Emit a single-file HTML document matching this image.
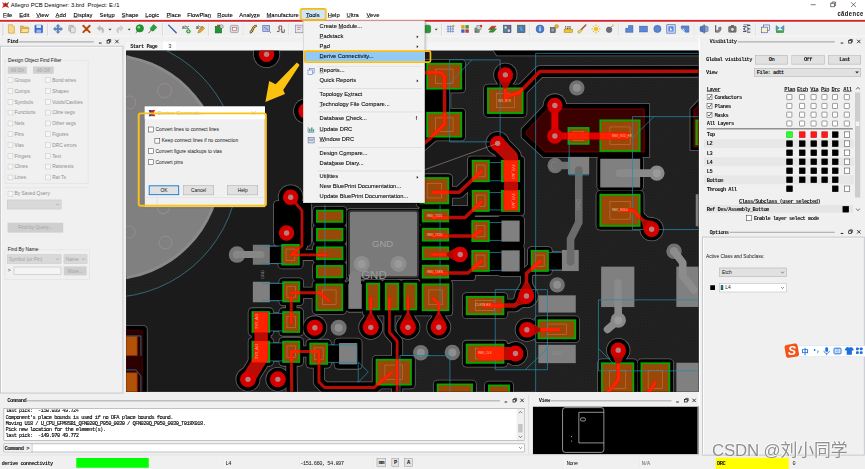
<!DOCTYPE html>
<html lang="en"><head><meta charset="utf-8"><title>Allegro PCB Designer: 3.brd  Project: E:/1</title>
<style>
html,body{margin:0;padding:0;overflow:hidden}
body{width:865px;height:469px;overflow:hidden;position:relative;background:#f0f0f0;font-family:"Liberation Sans",sans-serif;font-size:44.8px;color:#000;line-height:1}
.a{position:absolute;white-space:nowrap}
.m{font-family:"Liberation Mono","DejaVu Sans Mono",monospace;font-size:43.2px;letter-spacing:-4.32px;color:#111;font-weight:bold;margin-top:4.8px}
.btn.m{margin-top:0}
.ui{font-family:"Liberation Sans",sans-serif;font-size:45.6px;color:#111}
.mb span.i{z-index:2;position:absolute;top:97.6px;white-space:nowrap;font-size:46.4px;-webkit-text-stroke:0.8px #000}
u{text-decoration:underline;text-decoration-thickness:3.2px;text-underline-offset:3.2px}
.cb{position:absolute;width:35.2px;height:35.2px;border:4.8px solid #333;background:#fff}
.cbd{position:absolute;width:35.2px;height:35.2px;border:4px solid #c4c4c4;background:#f6f6f6}
.dis{color:#8c8c8c}
.btn{position:absolute;box-sizing:border-box;border:4px solid #adadad;background:#e1e1e1;text-align:center}
.sq{position:absolute;width:44.8px;height:44.8px;box-sizing:border-box;border:4.8px solid #333;background:#fff}
.bk{background:#000;border-color:#000}
.rd{background:#ff1a1a;border-color:#c00}
.gn{background:#2cff2c;border-color:#0b0}
.hl{position:absolute;height:9.6px;background:#adadad}
.ti{position:absolute;top:200px;width:88px;height:80px}
.sep{position:absolute;top:188px;width:4.8px;height:104px;background:#c9c9c9}
.mi{position:absolute;left:128px;white-space:nowrap;font-size:46px;color:#111;-webkit-text-stroke:0.8px #111}
.msep{position:absolute;left:112px;right:16px;height:4.8px;background:#d4d4d4}
.arr{position:absolute;left:905.6px;width:0;height:0;border-left:13.6px solid #111;border-top:11.2px solid transparent;border-bottom:11.2px solid transparent}
</style></head><body><div id="clip" style="position:absolute;left:0;top:0;width:865px;height:469px;overflow:hidden"><div id="root" style="position:absolute;left:0;top:0;width:6920px;height:3752px;transform:scale(0.125);transform-origin:0 0;font-size:44.8px">
<!-- title bar -->
<div class="a" style="left:0;top:0;width:6920px;height:160px;background:#fff"></div>
<svg class="a" style="left:12px;top:8px" width="64" height="64" viewBox="0 0 8 8"><path d="M0.5 1 L3 2.4 L4 1.2 L5 2.4 L7.5 1 L6 4 L7.5 7 L4 5.4 L0.5 7 L2 4Z" fill="#d22"/><path d="M4 1.2 L5 2.4 L7.5 1 L6 4Z" fill="#1a9a1a"/><path d="M2.6 4 L4 3.2 L5.4 4 L4 5Z" fill="#7a1a1a"/></svg>
<div class="a" style="left:86.4px;top:12.8px;font-size:46.8px;color:#000">Allegro PCB Designer: 3.brd&nbsp; Project: E:/1</div>
<svg class="a" style="left:6440px;top:0" width="480" height="80" viewBox="805 0 60 10" fill="none" stroke="#222" stroke-width="0.6"><path d="M810.7 4.7h5"/><rect x="830.8" y="3.2" width="3.6" height="3.6"/><path d="M832 3.2v-1.2h3.6v3.6h-1.2"/><path d="M851.1 2.2l4.8 4.8M855.9 2.2l-4.8 4.8"/></svg>
<!-- menu bar -->
<div class="mb">
<span class="i" style="left:24px"><u>F</u>ile</span><span class="i" style="left:154.4px"><u>E</u>dit</span><span class="i" style="left:290.4px"><u>V</u>iew</span><span class="i" style="left:444.8px"><u>A</u>dd</span><span class="i" style="left:587.2px"><u>D</u>isplay</span><span class="i" style="left:796.8px">Set<u>u</u>p</span><span class="i" style="left:972.8px"><u>S</u>hape</span><span class="i" style="left:1161.6px"><u>L</u>ogic</span><span class="i" style="left:1331.2px"><u>P</u>lace</span><span class="i" style="left:1497.6px">FlowPla<u>n</u></span><span class="i" style="left:1737.6px"><u>R</u>oute</span><span class="i" style="left:1914.4px">Analy<u>z</u>e</span><span class="i" style="left:2132px"><u>M</u>anufacture</span>
<div class="a" style="left:2397.6px;top:64px;width:216px;height:100.8px;box-sizing:border-box;border:13.6px solid #f9b90c;border-radius:19.2px;background:#cde6f8;z-index:1"></div>
<span class="i" style="left:2448px"><u>T</u>ools</span><span class="i" style="left:2621.6px"><u>H</u>elp</span><span class="i" style="left:2772.8px"><u>U</u>ltra</span><span class="i" style="left:2932px"><u>V</u>eve</span>
</div>
<div class="a" style="left:6699.2px;top:87.2px;font-size:50.4px;letter-spacing:4px;color:#111;font-weight:bold;transform:scaleX(0.92);transform-origin:0 0">cādence</div><div class="a" style="left:6732.8px;top:90.4px;width:19.2px;height:4.8px;background:#d22"></div>
<div class="a" style="left:0;top:159.2px;width:6920px;height:16px;background:#d7262c"></div>
<!-- toolbar -->
<div class="a" style="left:0;top:175.2px;width:6920px;height:4.8px;background:#fff"></div>
<svg class="a" style="left:0;top:169.6px" width="6920" height="136" viewBox="0 21.2 865 17"><rect x="2.6" y="23.3" width="0.6" height="13" fill="#c6c6c6"/><g transform="translate(11.4,28.9)"><path d="M-3 -4.2h4l2 2v6.4h-6z" fill="#f7d98a" stroke="#c89a2a" stroke-width="0.6"/><path d="M1 -4.2v2h2" fill="#fff3c8" stroke="#c89a2a" stroke-width="0.4"/></g><g transform="translate(24.7,28.9)"><path d="M-4.2 3.6v-6.6h2.6l1 1.2h4.2v5.4z" fill="#e9b84a" stroke="#b98516" stroke-width="0.5"/><path d="M-4.2 3.6l1.6-4h7.2l-1.6 4z" fill="#fbe29a" stroke="#b98516" stroke-width="0.5"/></g><g transform="translate(38.7,28.9)"><rect x="-3.8" y="-3.8" width="7.6" height="7.6" rx="0.6" fill="#3b6fd1" stroke="#264a9a" stroke-width="0.5"/><rect x="-2.3" y="-3.8" width="4.6" height="2.8" fill="#dfe9fb"/><rect x="-2.3" y="0.8" width="4.6" height="3" fill="#9bb8ee"/></g><rect x="47.5" y="23.3" width="0.6" height="13" fill="#c6c6c6"/><rect x="48.1" y="23.3" width="0.5" height="13" fill="#fff"/><g transform="translate(58.0,28.9)"><path d="M0 -4.6l1.7 1.9h-1v2h2v-1l1.9 1.7l-1.9 1.7v-1h-2v2h1l-1.7 1.9l-1.7-1.9h1v-2h-2v1l-1.9-1.7l1.9-1.7v1h2v-2h-1z" fill="#5a85c8" stroke="#2d5596" stroke-width="0.4"/></g><g transform="translate(72.0,28.9)"><rect x="-3.2" y="-3.6" width="4.6" height="5.8" rx="0.8" fill="#cfcfcf" stroke="#8a8a8a" stroke-width="0.5"/><rect x="-1.4" y="-2" width="4.6" height="5.8" rx="0.8" fill="#e4e4e4" stroke="#8a8a8a" stroke-width="0.5"/></g><g transform="translate(86.5,28.9)"><path d="M-3.2 -3.2l6.4 6.4M3.2 -3.2l-6.4 6.4" stroke="#b8480f" stroke-width="2" stroke-linecap="round"/></g><g transform="translate(101.0,28.9)"><path d="M2.2 3.6c1.4-3 0-5.6-3.4-5.2v-1.8l-2.6 2.8l2.6 2.6v-1.7c2-0.2 3 1 2.2 3.3z" fill="#bdbdbd" stroke="#9a9a9a" stroke-width="0.3"/></g><path d="M108.5 28.599999999999998h3l-1.5 1.8z" fill="#444"/><g transform="translate(119.5,28.9)"><path d="M-2.2 3.6c-1.4-3 0-5.6 3.4-5.2v-1.8l2.6 2.8l-2.6 2.6v-1.7c-2-0.2-3 1-2.2 3.3z" fill="#cfcfcf" stroke="#aaa" stroke-width="0.3"/></g><path d="M127.7 28.599999999999998h3l-1.5 1.8z" fill="#444"/><g transform="translate(139.4,28.9)"><circle cx="0.4" cy="-0.6" r="3.7" fill="#1c9a2e" stroke="#0c5c18" stroke-width="0.5"/><circle cx="-0.6" cy="-1.6" r="1.3" fill="#7fe08c"/><path d="M-3.6 3.8l1.8-1.6" stroke="#333" stroke-width="0.8"/></g><g transform="translate(152.6,28.9)"><path d="M-4 4.2l3-3.4" stroke="#444" stroke-width="0.8"/><path d="M-2.2 -0.8l3.2-3.6l3.2 2.8l-3.4 3.6c-1.4 0.4-3-1-3-2.8z" fill="#25a43a" stroke="#0f6a20" stroke-width="0.5"/></g><rect x="162.5" y="23.3" width="0.6" height="13" fill="#c6c6c6"/><rect x="163.1" y="23.3" width="0.5" height="13" fill="#fff"/><g transform="translate(172.4,28.9)"><path d="M-3.8 -3.8l7.6 7.6" stroke="#2d5fa8" stroke-width="1.3" stroke-linecap="round"/></g><g transform="translate(186.4,28.9)"><text x="-4.4" y="-0.2" font-family="Liberation Sans,sans-serif" font-size="4.6" fill="#333">abc</text><circle cx="2" cy="2.4" r="2.2" fill="#23a534"/><path d="M0.8 2.4h2.4M2 1.2v2.4" stroke="#fff" stroke-width="0.6"/></g><g transform="translate(200.2,28.9)"><text x="-4.4" y="-0.2" font-family="Liberation Sans,sans-serif" font-size="4.6" fill="#333">abc</text><path d="M-2.4 4l1-2.6l4.2-3.6l1.6 1.6l-4.2 3.8z" fill="#e8a320" stroke="#8a5a0a" stroke-width="0.4"/></g><rect x="208.2" y="23.3" width="0.6" height="13" fill="#c6c6c6"/><rect x="208.8" y="23.3" width="0.5" height="13" fill="#fff"/><g transform="translate(219.0,28.9)"><rect x="-3.8" y="-2.6" width="6.4" height="6.6" fill="#1e9632" stroke="#0d5a1b" stroke-width="0.5"/><rect x="-2" y="-4.2" width="3.4" height="2.4" fill="#8a5a2a"/><circle cx="2.6" cy="-2.4" r="1.8" fill="#c8d4e8" stroke="#556" stroke-width="0.4"/></g><g transform="translate(234.3,28.9)"><rect x="-4" y="-3.6" width="8" height="7.2" rx="1.4" fill="#d6dbe8" stroke="#7c86a6" stroke-width="0.6"/><rect x="-2" y="-1.6" width="4" height="3.2" fill="#f4f4f4" stroke="#d0642a" stroke-width="0.6"/></g><rect x="242.9" y="23.3" width="0.6" height="13" fill="#c6c6c6"/><rect x="243.5" y="23.3" width="0.5" height="13" fill="#fff"/><g transform="translate(253.4,28.9)"><path d="M-3.6 3.4c2-0.2 2.4-1.6 3-3.4s1.6-3 4-3.2" fill="none" stroke="#222" stroke-width="2.2"/><path d="M-3.6 3.4c2-0.2 2.4-1.6 3-3.4s1.6-3 4-3.2" fill="none" stroke="#f4c21a" stroke-width="1.1"/></g><g transform="translate(266.6,28.9)"><rect x="-3.8" y="-3.4" width="6.8" height="5.8" fill="#a9c4ee" stroke="#3a62b0" stroke-width="0.6"/><path d="M-2.4 -1.8l4 3M3 2.4l1.2 1.6" stroke="#c03a2a" stroke-width="0.7"/></g><g transform="translate(280.9,28.9)"><path d="M-4 2.6h2.2v-5.6h2.6v6.4h2.6v-3" fill="none" stroke="#666" stroke-width="1"/><path d="M-3 -2l5 5" stroke="#c04a2a" stroke-width="0.6"/></g><rect x="288.7" y="23.3" width="0.6" height="13" fill="#c6c6c6"/><rect x="289.3" y="23.3" width="0.5" height="13" fill="#fff"/><g transform="translate(299.2,28.9)"><rect x="-3.8" y="-3.8" width="7.6" height="7.6" fill="#e6e6ee" stroke="#7a7f96" stroke-width="0.6"/><path d="M-2 -1.6h4M-2 0.4h3" stroke="#c0504a" stroke-width="0.6"/></g><g transform="translate(427.6,28.9)"><rect x="-3.4" y="-3.8" width="6.4" height="7.6" rx="1.6" fill="#2a9a36" stroke="#14601e" stroke-width="0.5"/></g><path d="M434.7 28.599999999999998h3l-1.5 1.8z" fill="#444"/><rect x="441.3" y="23.3" width="0.6" height="13" fill="#c6c6c6"/><rect x="441.9" y="23.3" width="0.5" height="13" fill="#fff"/><g transform="translate(450.5,28.9)"><path d="M-3.6 -2.4h7.2M-3.6 0h7.2M-3.6 2.4h7.2M-2.4 -3.6v7.2M0 -3.6v7.2M2.4 -3.6v7.2" stroke="#5d80c4" stroke-width="0.7"/><circle cx="3" cy="-3.2" r="1" fill="#e9a020"/></g><g transform="translate(465.0,28.9)"><rect x="-3.8" y="-3.8" width="3.4" height="3.4" fill="#e0a21c"/><rect x="0.4" y="-3.8" width="3.4" height="3.4" fill="#3b9a3b"/><rect x="-3.8" y="0.4" width="3.4" height="3.4" fill="#3a66c0"/><rect x="0.4" y="0.4" width="3.4" height="3.4" fill="#c63a2a"/></g><g transform="translate(478.5,28.9)"><rect x="-3.6" y="-1" width="4.4" height="4.6" fill="#888" stroke="#555" stroke-width="0.4"/><rect x="-1.6" y="-3.4" width="4.2" height="4.2" fill="#c8ccd8" stroke="#555" stroke-width="0.4"/><circle cx="2.6" cy="-3" r="1.2" fill="#d23a2a"/><circle cx="-2.4" cy="2.6" r="1.1" fill="#2a9a36"/></g><g transform="translate(492.5,28.9)"><path d="M-4 0.6l3-3.4h4.6l-3 3.4z" fill="#c63a2a" stroke="#7a1a10" stroke-width="0.4"/><path d="M-3.6 3.2l3-3.4h4.6l-3 3.4z" fill="#2f9a3a" stroke="#14601e" stroke-width="0.4"/></g><g transform="translate(507.2,28.9)"><rect x="-3.8" y="-3.8" width="7.6" height="7.6" fill="#5472a8" stroke="#2c3f66" stroke-width="0.5"/><rect x="-2.6" y="-2.6" width="2" height="2.2" fill="#e4e9f4"/><rect x="0.6" y="-2.6" width="2" height="2.2" fill="#e04a3a"/><rect x="-2.6" y="0.6" width="2" height="2.2" fill="#3aa84a"/><rect x="0.6" y="0.6" width="2" height="2.2" fill="#e4e9f4"/></g><g transform="translate(521.2,28.9)"><rect x="-3.8" y="-3.8" width="7.6" height="7.6" fill="#6a7890" stroke="#39445c" stroke-width="0.5"/><circle r="2.8" fill="#3a78c8"/><path d="M-1.6 -1.4c1.2-1 2.4 0.2 1.4 1.4s0.8 1.8 1.8 0.6" stroke="#7fd48a" stroke-width="0.9" fill="none"/></g><rect x="529.7" y="23.3" width="0.6" height="13" fill="#c6c6c6"/><rect x="530.3" y="23.3" width="0.5" height="13" fill="#fff"/><g transform="translate(540.0,28.9)"><circle r="3.9" fill="#4a7fd0" stroke="#2a4f94" stroke-width="0.6"/><rect x="-0.6" y="-0.8" width="1.2" height="3" fill="#fff"/><circle cy="-2" r="0.7" fill="#fff"/></g><g transform="translate(554.0,28.9)"><rect x="-3.8" y="-1.6" width="5.2" height="5.4" fill="#6b6f7a" stroke="#3a3d46" stroke-width="0.4"/><rect x="-2.6" y="-0.4" width="2.6" height="3" fill="#9aa0b0"/><circle cx="2.6" cy="-2.6" r="1.9" fill="#f0b41c" stroke="#a87608" stroke-width="0.4"/></g><g transform="translate(568.3,28.9)"><rect x="-4.2" y="0.2" width="8.4" height="3.2" fill="#f1c232" stroke="#a87a08" stroke-width="0.5"/><text x="-3.6" y="-0.4" font-family="Liberation Sans,sans-serif" font-size="3.6" font-weight="bold" fill="#333">123</text></g><g transform="translate(582.0,28.9)"><path d="M3.8 -4l-4.4 4.6" stroke="#a0522d" stroke-width="1.5" stroke-linecap="round"/><path d="M-1.2 0.2l1.4 1.4l-2.6 2.6l-1.6-0.6l-0.2-1.2z" fill="#f2d064" stroke="#8a6a14" stroke-width="0.4"/></g><g transform="translate(596.0,28.9)"><circle r="2.2" fill="#f6c21c"/><path d="M0 -4.4v1.4M0 4.4v-1.4M-4.4 0h1.4M4.4 0h-1.4M-3.1 -3.1l1 1M3.1 3.1l-1-1M-3.1 3.1l1-1M3.1 -3.1l-1 1" stroke="#e9a60c" stroke-width="0.9"/></g><g transform="translate(609.5,28.9)"><circle cx="-0.4" cy="0.8" r="2.8" fill="#6a6e78" stroke="#3c3f48" stroke-width="0.4"/><path d="M1.6 -1.6l1.4-1.6" stroke="#555" stroke-width="0.7"/><path d="M3 -4.6v1M4.6 -3.2h-1M4.2 -4.4l-0.7 0.7" stroke="#e9a60c" stroke-width="0.6"/></g><rect x="618.7" y="23.3" width="0.6" height="13" fill="#c6c6c6"/><rect x="619.3" y="23.3" width="0.5" height="13" fill="#fff"/><g transform="translate(629.3,28.9)"><path d="M-3.6 3.4v-4h2.8v-2.8h4.4v6.8z" fill="#5b86d4" stroke="#2f55a0" stroke-width="0.5"/></g><g transform="translate(643.5,28.9)"><rect x="-3.8" y="-2.8" width="7.6" height="5.8" fill="#5b86d4" stroke="#2f55a0" stroke-width="0.5"/></g><g transform="translate(657.4,28.9)"><circle r="3.6" fill="#5b86d4" stroke="#2f55a0" stroke-width="0.5"/></g><g transform="translate(671.0,28.9)"><rect x="-4.2" y="-4.2" width="8.4" height="8.4" fill="#cfe0fa" stroke="#2f55a0" stroke-width="0.6"/><rect x="-2.6" y="-2.6" width="5.2" height="5.2" fill="#5b86d4"/><path d="M-1 -1.8l2.6 3.2l-1.4-0.2l-0.8 1.2z" fill="#fff"/></g><g transform="translate(685.1,28.9)"><path d="M-3.8 -3h7.6v6.2h-3.4l-4.2-3.4z" fill="#5b86d4" stroke="#2f55a0" stroke-width="0.5"/><path d="M0.4 3.2l-1.2-3.6l-3-0.4" fill="#dbe7fb" stroke="#2f55a0" stroke-width="0.4"/></g><rect x="693.9" y="23.3" width="0.6" height="13" fill="#c6c6c6"/><rect x="694.5" y="23.3" width="0.5" height="13" fill="#fff"/><g transform="translate(704.1,28.9)"><rect x="-0.5" y="-4.4" width="1" height="8.8" fill="#333"/><path d="M-0.8 -3.2l-3.2 1v4.4l3.2 1z" fill="#4a74c4" stroke="#284a8a" stroke-width="0.4"/><path d="M0.8 -3.2l3.2 1v4.4l-3.2 1z" fill="#8aa8e0" stroke="#284a8a" stroke-width="0.4"/></g><g transform="translate(718.3,28.9)"><path d="M-2.6 -3.8v7.2" stroke="#444" stroke-width="1"/><path d="M-2 3.4c3.6 0.6 5.4-2 4.6-5.4l-2.4 0.6c0.6 2-0.4 3.2-2.2 3z" fill="#888" stroke="#444" stroke-width="0.4"/></g><g transform="translate(732.4,28.9)"><rect x="-3.8" y="-2.6" width="7.6" height="6" rx="0.8" fill="#777" stroke="#444" stroke-width="0.4"/><circle cy="0.4" r="1.9" fill="#ddd" stroke="#333" stroke-width="0.5"/><rect x="-1.4" y="-3.8" width="2.8" height="1.4" fill="#555"/></g><g transform="translate(746.6,28.9)"><path d="M-3.6 -2.6h3M-3.6 0h2.2M-3.6 2.6h3M0.4 -3.4h3.4M0.4 0h3.4M0.4 3.2h3.4" stroke="#3e4c6c" stroke-width="1"/><circle cx="-0.2" r="2.1" fill="none" stroke="#3e4c6c" stroke-width="0.7"/><path d="M-3 -4.4h6" stroke="#3e4c6c" stroke-width="0.5"/></g><rect x="755.1" y="23.3" width="0.6" height="13" fill="#c6c6c6"/><rect x="755.7" y="23.3" width="0.5" height="13" fill="#fff"/><g transform="translate(765.3,28.9)"><rect x="-2" y="-4" width="6" height="5.6" fill="#e8eefb" stroke="#3a5aa8" stroke-width="0.6"/><rect x="-4" y="-1.8" width="6" height="5.6" fill="#fbf1c4" stroke="#3a5aa8" stroke-width="0.6"/></g><g transform="translate(780.0,28.9)"><path d="M-4 -3.4l3.4 2.4l-3.4 2.6z" fill="#57a0c8" stroke="#2a6a8a" stroke-width="0.4"/><path d="M4 -3.4l-3.4 2.4l3.4 2.6z" fill="#57a0c8" stroke="#2a6a8a" stroke-width="0.4"/><rect x="-3.8" y="1.6" width="7.6" height="2.2" fill="#3aa84a" stroke="#1a6a2a" stroke-width="0.3"/></g></svg><div class="a m" style="left:57.6px;top:308px">Find</div>
<div class="hl" style="left:152px;top:330.4px;width:596.8px"></div>
<svg class="a" style="left:778.4px;top:299.2px" width="197.6" height="64" viewBox="97.3 37.4 24.700000000000003 8" fill="none" stroke="#111" stroke-width="0.7"><path d="M99.0 43.1h2.6" stroke-width="0.9"/><rect x="107.10000000000001" y="40.5" width="2.6" height="2.6"/><path d="M108.10000000000001 40.5v-1h2.6v2.6h-1"/><path d="M115.3 39.8l3.4 3.4M118.7 39.8l-3.4 3.4" stroke-width="0.8"/></svg>
<div class="a" style="left:0;top:365.6px;width:987.2px;height:2782.4px;box-sizing:border-box;border:7.2px solid #c2c4cc;box-shadow:inset 6.4px 6.4px 0 #fff;background:#f0f0f0"></div>
<div class="a" style="left:37.6px;top:480px;width:669.6px;height:990.4px;box-sizing:border-box;border:4px solid #dcdcdc"></div>
<div class="a ui" style="left:59.2px;top:461.6px;background:#f0f0f0;padding:0 5.6px;font-size:38.8px">Design Object Find Filter</div>
<div class="a ui" style="left:61.6px;top:532px;width:153.6px;height:57.6px;background:#cfcfcf;color:#a3a3a3;text-align:center;line-height:57.6px;font-size:38.8px">All On</div>
<div class="a ui" style="left:264px;top:532px;width:165.6px;height:57.6px;background:#cfcfcf;color:#a3a3a3;text-align:center;line-height:57.6px;font-size:38.8px">All Off</div>
<div class="cbd" style="left:61.6px;top:620px"></div><div class="a ui dis" style="left:116px;top:623.2px;font-size:38.8px">Groups</div>
<div class="cbd" style="left:361.6px;top:620px"></div><div class="a ui dis" style="left:417.6px;top:623.2px;font-size:38.8px">Bond wires</div>
<div class="cbd" style="left:61.6px;top:706.4px"></div><div class="a ui dis" style="left:116px;top:709.6px;font-size:38.8px">Comps</div>
<div class="cbd" style="left:361.6px;top:706.4px"></div><div class="a ui dis" style="left:417.6px;top:709.6px;font-size:38.8px">Shapes</div>
<div class="cbd" style="left:61.6px;top:792.8px"></div><div class="a ui dis" style="left:116px;top:796px;font-size:38.8px">Symbols</div>
<div class="cbd" style="left:361.6px;top:792.8px"></div><div class="a ui dis" style="left:417.6px;top:796px;font-size:38.8px">Voids/Cavities</div>
<div class="cbd" style="left:61.6px;top:879.2px"></div><div class="a ui dis" style="left:116px;top:882.4px;font-size:38.8px">Functions</div>
<div class="cbd" style="left:361.6px;top:879.2px"></div><div class="a ui dis" style="left:417.6px;top:882.4px;font-size:38.8px">Cline segs</div>
<div class="cbd" style="left:61.6px;top:965.6px"></div><div class="a ui dis" style="left:116px;top:968.8px;font-size:38.8px">Nets</div>
<div class="cbd" style="left:361.6px;top:965.6px"></div><div class="a ui dis" style="left:417.6px;top:968.8px;font-size:38.8px">Other segs</div>
<div class="cbd" style="left:61.6px;top:1052px"></div><div class="a ui dis" style="left:116px;top:1055.2px;font-size:38.8px">Pins</div>
<div class="cbd" style="left:361.6px;top:1052px"></div><div class="a ui dis" style="left:417.6px;top:1055.2px;font-size:38.8px">Figures</div>
<div class="cbd" style="left:61.6px;top:1138.4px"></div><div class="a ui dis" style="left:116px;top:1141.6px;font-size:38.8px">Vias</div>
<div class="cbd" style="left:361.6px;top:1138.4px"></div><div class="a ui dis" style="left:417.6px;top:1141.6px;font-size:38.8px">DRC errors</div>
<div class="cbd" style="left:61.6px;top:1224.8px"></div><div class="a ui dis" style="left:116px;top:1228px;font-size:38.8px">Fingers</div>
<div class="cbd" style="left:361.6px;top:1224.8px"></div><div class="a ui dis" style="left:417.6px;top:1228px;font-size:38.8px">Text</div>
<div class="cbd" style="left:61.6px;top:1311.2px"></div><div class="a ui dis" style="left:116px;top:1314.4px;font-size:38.8px">Clines</div>
<div class="cbd" style="left:361.6px;top:1311.2px"></div><div class="a ui dis" style="left:417.6px;top:1314.4px;font-size:38.8px">Ratsnests</div>
<div class="cbd" style="left:61.6px;top:1397.6px"></div><div class="a ui dis" style="left:116px;top:1400.8px;font-size:38.8px">Lines</div>
<div class="cbd" style="left:361.6px;top:1397.6px"></div><div class="a ui dis" style="left:417.6px;top:1400.8px;font-size:38.8px">Rat Ts</div>
<div class="hl" style="left:37.6px;top:1500.8px;width:669.6px;background:#dcdcdc;height:4px"></div>
<div class="cbd" style="left:61.6px;top:1528px"></div><div class="a ui dis" style="left:116px;top:1531.2px;font-size:38.8px">By Saved Query</div>
<div class="a" style="left:56px;top:1598.4px;width:435.2px;height:75.2px;box-sizing:border-box;border:4px solid #c8c8c8;background:#d9d9d9"></div>
<svg class="a" style="left:444px;top:1624px" width="32" height="24" viewBox="0 0 4 3"><path d="M0.4 0.5l1.6 1.7l1.6-1.7" fill="none" stroke="#9a9a9a" stroke-width="0.6"/></svg>
<div class="a ui" style="left:60px;top:1782.4px;width:446.4px;height:78.4px;background:#cfcfcf;color:#a3a3a3;text-align:center;line-height:78.4px;font-size:38.8px">Find by Query...</div>
<div class="a" style="left:37.6px;top:1996.8px;width:680px;height:240px;box-sizing:border-box;border:4px solid #dcdcdc"></div>
<div class="a ui" style="left:56px;top:1972px;background:#f0f0f0;padding:0 5.6px;font-size:38.8px">Find By Name</div>
<div class="a ui" style="left:56.8px;top:2036px;width:432.8px;height:72.8px;box-sizing:border-box;border:4px solid #c8c8c8;background:#d9d9d9;color:#a3a3a3;line-height:66.4px;padding-left:10.4px;font-size:38.8px">Symbol (or Pin)</div>
<svg class="a" style="left:444px;top:2062.4px" width="32" height="24" viewBox="0 0 4 3"><path d="M0.4 0.5l1.6 1.7l1.6-1.7" fill="none" stroke="#9a9a9a" stroke-width="0.6"/></svg>
<div class="a ui" style="left:509.6px;top:2036px;width:188px;height:72.8px;box-sizing:border-box;border:4px solid #c8c8c8;background:#d9d9d9;color:#a3a3a3;line-height:66.4px;padding-left:12.8px;font-size:38.8px">Name</div>
<svg class="a" style="left:652px;top:2062.4px" width="32" height="24" viewBox="0 0 4 3"><path d="M0.4 0.5l1.6 1.7l1.6-1.7" fill="none" stroke="#9a9a9a" stroke-width="0.6"/></svg>
<div class="a ui" style="left:61.6px;top:2142.4px;font-size:38.8px">&gt;</div>
<div class="a" style="left:110.4px;top:2133.6px;width:379.2px;height:65.6px;box-sizing:border-box;border:4px solid #b4b4b4;background:#f4f4f4"></div>
<div class="a ui" style="left:509.6px;top:2131.2px;width:183.2px;height:72px;background:#cfcfcf;color:#a3a3a3;text-align:center;line-height:72px;font-size:38.8px">More...</div>
<div class="a" style="left:1008px;top:339.2px;width:4580px;height:65.6px;background:#f5f5f5"></div><div class="a" style="left:0;top:287.2px;width:6920px;height:4.8px;background:#f9f9f9"></div>
<div class="a m" style="left:1041.6px;top:348px;font-weight:bold">Start Page</div>
<div class="a" style="left:1304px;top:332.8px;width:104px;height:72px;background:#fff"></div><div class="a m" style="left:1345.6px;top:346.4px;font-weight:normal;color:#333">3</div>
<div class="a m" style="left:5676px;top:308px">Visibility</div>
<div class="hl" style="left:5901.6px;top:330.4px;width:776px"></div>
<svg class="a" style="left:6712px;top:299.2px" width="198.4" height="64" viewBox="839 37.4 24.799999999999955 8" fill="none" stroke="#111" stroke-width="0.7"><path d="M840.7 43.1h2.6" stroke-width="0.9"/><rect x="848.6999999999999" y="40.5" width="2.6" height="2.6"/><path d="M849.6999999999999 40.5v-1h2.6v2.6h-1"/><path d="M857.0999999999999 39.8l3.4 3.4M860.5 39.8l-3.4 3.4" stroke-width="0.8"/></svg>
<div class="a" style="left:5588px;top:304px;width:11.2px;height:3336px;background:#fff"></div>
<div class="a m" style="left:5648.8px;top:452.8px">Global visibility</div>
<div class="btn m" style="left:6041.6px;top:441.6px;width:260.8px;height:73.6px;line-height:65.6px">On</div>
<div class="btn m" style="left:6331.2px;top:441.6px;width:264.8px;height:73.6px;line-height:65.6px">Off</div>
<div class="btn m" style="left:6626.4px;top:441.6px;width:261.6px;height:73.6px;line-height:65.6px">Last</div>
<div class="a m" style="left:5648.8px;top:556px">View</div>
<div class="btn m" style="left:6034.4px;top:544px;width:853.6px;height:68px;line-height:60px;text-align:left;padding-left:16px">File: adtt</div>
<svg class="a" style="left:6840px;top:568px" width="32" height="24" viewBox="0 0 4 3"><path d="M0.2 0.4h3.6l-1.8 2.2z" fill="#222"/></svg>
<div class="a m" style="left:5653.6px;top:688px;text-decoration:underline;text-decoration-thickness:4px;text-underline-offset:4px">Layer</div>
<div class="a m" style="left:6273.6px;top:688px;text-decoration:underline;text-decoration-thickness:4px;text-underline-offset:4px">Plan</div>
<div class="a m" style="left:6376px;top:688px;text-decoration:underline;text-decoration-thickness:4px;text-underline-offset:4px">Etch</div>
<div class="a m" style="left:6481.6px;top:688px;text-decoration:underline;text-decoration-thickness:4px;text-underline-offset:4px">Via</div>
<div class="a m" style="left:6567.2px;top:688px;text-decoration:underline;text-decoration-thickness:4px;text-underline-offset:4px">Pin</div>
<div class="a m" style="left:6652px;top:688px;text-decoration:underline;text-decoration-thickness:4px;text-underline-offset:4px">Drc</div>
<div class="a m" style="left:6746.4px;top:688px;text-decoration:underline;text-decoration-thickness:4px;text-underline-offset:4px">All</div>
<svg class="a" style="left:6844px;top:692px" width="40" height="32" viewBox="0 0 5 4"><path d="M0.5 3l2-2.2l2 2.2" fill="none" stroke="#333" stroke-width="0.7"/></svg>
<div class="a" style="left:6840px;top:740px;width:42.4px;height:840px;background:#cdcdcd"></div>
<div class="a" style="left:6846.4px;top:972px;width:28.8px;height:36px;background:#f4f4f4"></div>
<svg class="a" style="left:6844px;top:1660px" width="40" height="32" viewBox="0 0 5 4"><path d="M0.5 1l2 2.2l2-2.2" fill="none" stroke="#333" stroke-width="0.7"/></svg>
<div class="cb" style="left:5653.6px;top:755.2px;width:36.8px;height:36.8px"></div><svg class="a" style="left:5659.2px;top:760px" width="36.8" height="36.8" viewBox="0 0 4.6 4.6"><path d="M0.6 2.2l1.2 1.3l2.2-3" fill="none" stroke="#111" stroke-width="0.7"/></svg>
<div class="a m" style="left:5716.8px;top:754.4px">Conductors</div>
<div class="sq" style="left:6292px;top:754.4px;border-radius:6.4px;border-color:#444"></div>
<div class="sq" style="left:6394.4px;top:754.4px;border-radius:6.4px;border-color:#444"></div>
<div class="sq" style="left:6486.4px;top:754.4px;border-radius:6.4px;border-color:#444"></div>
<div class="sq" style="left:6572.8px;top:754.4px;border-radius:6.4px;border-color:#444"></div>
<div class="sq" style="left:6657.6px;top:754.4px;border-radius:6.4px;border-color:#444"></div>
<div class="sq" style="left:6752px;top:754.4px;border-radius:6.4px;border-color:#444"></div>
<div class="cb" style="left:5653.6px;top:825.6px;width:36.8px;height:36.8px"></div><svg class="a" style="left:5659.2px;top:830.4px" width="36.8" height="36.8" viewBox="0 0 4.6 4.6"><path d="M0.6 2.2l1.2 1.3l2.2-3" fill="none" stroke="#111" stroke-width="0.7"/></svg>
<div class="a m" style="left:5716.8px;top:824.8px">Planes</div>
<div class="sq" style="left:6292px;top:824.8px;border-radius:6.4px;border-color:#444"></div>
<div class="sq" style="left:6394.4px;top:824.8px;border-radius:6.4px;border-color:#444"></div>
<div class="sq" style="left:6486.4px;top:824.8px;border-radius:6.4px;border-color:#444"></div>
<div class="sq" style="left:6572.8px;top:824.8px;border-radius:6.4px;border-color:#444"></div>
<div class="sq" style="left:6657.6px;top:824.8px;border-radius:6.4px;border-color:#444"></div>
<div class="sq" style="left:6752px;top:824.8px;border-radius:6.4px;border-color:#444"></div>
<div class="cb" style="left:5653.6px;top:896px;width:36.8px;height:36.8px"></div><svg class="a" style="left:5659.2px;top:900.8px" width="36.8" height="36.8" viewBox="0 0 4.6 4.6"><path d="M0.6 2.2l1.2 1.3l2.2-3" fill="none" stroke="#111" stroke-width="0.7"/></svg>
<div class="a m" style="left:5716.8px;top:895.2px">Masks</div>
<div class="sq" style="left:6292px;top:895.2px;border-radius:6.4px;border-color:#444"></div>
<div class="sq" style="left:6394.4px;top:895.2px;border-radius:6.4px;border-color:#444"></div>
<div class="sq" style="left:6486.4px;top:895.2px;border-radius:6.4px;border-color:#444"></div>
<div class="sq" style="left:6572.8px;top:895.2px;border-radius:6.4px;border-color:#444"></div>
<div class="sq" style="left:6657.6px;top:895.2px;border-radius:6.4px;border-color:#444"></div>
<div class="sq" style="left:6752px;top:895.2px;border-radius:6.4px;border-color:#444"></div>
<div class="a m" style="left:5653.6px;top:965.6px">All Layers</div>
<div class="sq" style="left:6292px;top:965.6px;border-radius:6.4px;border-color:#444"></div>
<div class="sq" style="left:6394.4px;top:965.6px;border-radius:6.4px;border-color:#444"></div>
<div class="sq" style="left:6486.4px;top:965.6px;border-radius:6.4px;border-color:#444"></div>
<div class="sq" style="left:6572.8px;top:965.6px;border-radius:6.4px;border-color:#444"></div>
<div class="sq" style="left:6657.6px;top:965.6px;border-radius:6.4px;border-color:#444"></div>
<div class="sq" style="left:6752px;top:965.6px;border-radius:6.4px;border-color:#444"></div>
<div class="hl" style="left:5653.6px;top:1028px;width:1168px;background:#333;height:6.4px"></div>
<div class="a m" style="left:5653.6px;top:1053.6px">Top</div>
<div class="sq gn" style="left:6292px;top:1052.8px;width:48px;height:48px"></div>
<div class="sq rd" style="left:6394.4px;top:1052.8px;width:48px;height:48px"></div>
<div class="sq rd" style="left:6486.4px;top:1052.8px;width:48px;height:48px"></div>
<div class="sq rd" style="left:6572.8px;top:1052.8px;width:48px;height:48px"></div>
<div class="sq bk" style="left:6657.6px;top:1052.8px;width:48px;height:48px"></div>
<div class="sq " style="left:6752px;top:1052.8px;width:48px;height:48px"></div>
<div class="a" style="left:5632px;top:1112.8px;width:1200px;height:72px;background:#e7e7e7"></div>
<div class="a m" style="left:5653.6px;top:1125.6px">L2</div>
<div class="sq bk" style="left:6292px;top:1124.8px;width:48px;height:48px"></div>
<div class="sq bk" style="left:6394.4px;top:1124.8px;width:48px;height:48px"></div>
<div class="sq bk" style="left:6486.4px;top:1124.8px;width:48px;height:48px"></div>
<div class="sq bk" style="left:6572.8px;top:1124.8px;width:48px;height:48px"></div>
<div class="sq bk" style="left:6657.6px;top:1124.8px;width:48px;height:48px"></div>
<div class="sq " style="left:6752px;top:1124.8px;width:48px;height:48px"></div>
<div class="a m" style="left:5653.6px;top:1198.4px">L3</div>
<div class="sq bk" style="left:6292px;top:1197.6px;width:48px;height:48px"></div>
<div class="sq bk" style="left:6394.4px;top:1197.6px;width:48px;height:48px"></div>
<div class="sq bk" style="left:6486.4px;top:1197.6px;width:48px;height:48px"></div>
<div class="sq bk" style="left:6572.8px;top:1197.6px;width:48px;height:48px"></div>
<div class="sq bk" style="left:6657.6px;top:1197.6px;width:48px;height:48px"></div>
<div class="sq " style="left:6752px;top:1197.6px;width:48px;height:48px"></div>
<div class="a" style="left:5632px;top:1257.6px;width:1200px;height:72px;background:#e7e7e7"></div>
<div class="a m" style="left:5653.6px;top:1270.4px">L4</div>
<div class="sq bk" style="left:6292px;top:1269.6px;width:48px;height:48px"></div>
<div class="sq bk" style="left:6394.4px;top:1269.6px;width:48px;height:48px"></div>
<div class="sq bk" style="left:6486.4px;top:1269.6px;width:48px;height:48px"></div>
<div class="sq bk" style="left:6572.8px;top:1269.6px;width:48px;height:48px"></div>
<div class="sq bk" style="left:6657.6px;top:1269.6px;width:48px;height:48px"></div>
<div class="sq " style="left:6752px;top:1269.6px;width:48px;height:48px"></div>
<div class="a m" style="left:5653.6px;top:1342.4px">L5</div>
<div class="sq bk" style="left:6292px;top:1341.6px;width:48px;height:48px"></div>
<div class="sq bk" style="left:6394.4px;top:1341.6px;width:48px;height:48px"></div>
<div class="sq bk" style="left:6486.4px;top:1341.6px;width:48px;height:48px"></div>
<div class="sq bk" style="left:6572.8px;top:1341.6px;width:48px;height:48px"></div>
<div class="sq bk" style="left:6657.6px;top:1341.6px;width:48px;height:48px"></div>
<div class="sq " style="left:6752px;top:1341.6px;width:48px;height:48px"></div>
<div class="a" style="left:5632px;top:1401.6px;width:1200px;height:72px;background:#e7e7e7"></div>
<div class="a m" style="left:5653.6px;top:1414.4px">Bottom</div>
<div class="sq bk" style="left:6292px;top:1414.4px;width:48px;height:48px"></div>
<div class="sq bk" style="left:6394.4px;top:1414.4px;width:48px;height:48px"></div>
<div class="sq bk" style="left:6486.4px;top:1414.4px;width:48px;height:48px"></div>
<div class="sq bk" style="left:6572.8px;top:1414.4px;width:48px;height:48px"></div>
<div class="sq bk" style="left:6657.6px;top:1414.4px;width:48px;height:48px"></div>
<div class="a m" style="left:5653.6px;top:1487.2px">Through All</div>
<div class="sq bk" style="left:6292px;top:1486.4px;width:48px;height:48px"></div>
<div class="sq bk" style="left:6657.6px;top:1486.4px;width:48px;height:48px"></div>
<div class="sq " style="left:6752px;top:1486.4px;width:48px;height:48px"></div>
<div class="a m" style="left:5912.8px;top:1585.6px;text-decoration:underline;text-decoration-thickness:4px;text-underline-offset:4px">Class/Subclass (user selected)</div>
<div class="a" style="left:5646.4px;top:1640px;width:1177.6px;height:62.4px;background:#e5e5e5"></div><div class="a m" style="left:5653.6px;top:1651.2px">Ref Des/Assembly_Bottom</div><div class="sq bk" style="left:6742.4px;top:1650.4px;width:48px;height:48px"></div>
<div class="cb" style="left:5970.4px;top:1723.2px;width:36.8px;height:36.8px"></div><div class="a m" style="left:6032px;top:1722.4px">Enable layer select mode</div>
<div class="a m" style="left:5676.8px;top:1831.2px">Options</div>
<div class="hl" style="left:5836px;top:1853.6px;width:841.6px"></div>
<svg class="a" style="left:6712px;top:1822.4px" width="198.4" height="64" viewBox="839 227.8 24.799999999999955 8" fill="none" stroke="#111" stroke-width="0.7"><path d="M840.7 233.5h2.6" stroke-width="0.9"/><rect x="848.6999999999999" y="230.9" width="2.6" height="2.6"/><path d="M849.6999999999999 230.9v-1h2.6v2.6h-1"/><path d="M857.0999999999999 230.20000000000002l3.4 3.4M860.5 230.20000000000002l-3.4 3.4" stroke-width="0.8"/></svg>
<div class="a" style="left:5616.8px;top:1892.8px;width:1300.8px;height:1752px;box-sizing:border-box;border:7.2px solid #c2c4cc;box-shadow:inset 6.4px 6.4px 0 #fff"></div>
<div class="a ui" style="left:5647.2px;top:2032px;font-size:38.8px">Active Class and Subclass:</div>
<div class="a ui" style="left:5753.6px;top:2142.4px;width:539.2px;height:72px;box-sizing:border-box;border:4px solid #adadad;background:#e1e1e1;line-height:64px;padding-left:17.6px;font-size:38.8px">Etch</div>
<svg class="a" style="left:6244px;top:2168px" width="32" height="24" viewBox="0 0 4 3"><path d="M0.4 0.5l1.6 1.7l1.6-1.7" fill="none" stroke="#444" stroke-width="0.6"/></svg>
<div class="a ui" style="left:5753.6px;top:2265.6px;width:539.2px;height:72px;box-sizing:border-box;border:4px solid #adadad;background:#fff;line-height:64px;padding-left:44px;font-size:38.8px">L4</div>
<svg class="a" style="left:6244px;top:2291.2px" width="32" height="24" viewBox="0 0 4 3"><path d="M0.4 0.5l1.6 1.7l1.6-1.7" fill="none" stroke="#444" stroke-width="0.6"/></svg>
<div class="a" style="left:5681.6px;top:2281.6px;width:38.4px;height:38.4px;background:#000"></div><div class="a" style="left:5767.2px;top:2283.2px;width:17.6px;height:36.8px;background:#1a8aa0;border:3.2px solid #222;box-sizing:border-box"></div>
<div class="a m" style="left:57.6px;top:3179.2px">Command</div><div class="hl" style="left:216px;top:3201.6px;width:3784px"></div>
<svg class="a" style="left:4016px;top:3168px" width="208" height="64" viewBox="502 396 26 8" fill="none" stroke="#111" stroke-width="0.7"><path d="M504.6 402h2.6" stroke-width="0.9"/><rect x="513" y="399.4" width="2.6" height="2.6"/><path d="M514 399.4v-1h2.6v2.6h-1"/><path d="M520.4 398.7l3.4 3.4M523.8 398.7l-3.4 3.4" stroke-width="0.8"/></svg>
<div class="a" style="left:28.8px;top:3267.2px;width:4169.6px;height:257.6px;box-sizing:border-box;border:4.8px solid #828790;background:#fff;overflow:hidden"></div>
<div class="a m" style="left:44.8px;top:3261.6px;clip-path:inset(9.6px 0 0 0);font-weight:normal;color:#000;-webkit-text-stroke:0.96px #000">last pick:&nbsp; -150.039 49.724</div>
<div class="a m" style="left:44.8px;top:3311.2px;font-weight:normal;color:#000;-webkit-text-stroke:0.96px #000">Component's place bounds is used if no DFA place bounds found.</div>
<div class="a m" style="left:44.8px;top:3360px;font-weight:normal;color:#000;-webkit-text-stroke:0.96px #000">Moving U18 / U_CPU_EFM8SB1_QFN020Q_P050_0030 / QFN020Q_P050_0030_T018X018.</div>
<div class="a m" style="left:44.8px;top:3409.6px;font-weight:normal;color:#000;-webkit-text-stroke:0.96px #000">Pick new location for the element(s).</div>
<div class="a m" style="left:44.8px;top:3458.4px;font-weight:normal;color:#000;-webkit-text-stroke:0.96px #000">last pick:&nbsp; -149.970 49.772</div>
<div class="a" style="left:4132.8px;top:3272px;width:60.8px;height:248px;background:#f0f0f0"></div>
<svg class="a" style="left:4132.8px;top:3272px" width="60.8" height="248" viewBox="0 0 7.6 31" fill="none" stroke="#555" stroke-width="0.7"><path d="M2.2 4.2l1.6-1.8l1.6 1.8"/><path d="M2.2 26.8l1.6 1.8l1.6-1.8"/><rect x="1.6" y="15" width="4.4" height="8.5" fill="#c4c4c4" stroke="none"/></svg>
<div class="a" style="left:28.8px;top:3548.8px;width:4169.6px;height:68.8px;box-sizing:border-box;border:4.8px solid #828790;background:#fff"></div>
<div class="a" style="left:252.8px;top:3548.8px;width:4.8px;height:68.8px;background:#828790"></div><div class="a" style="left:33.6px;top:3553.6px;width:219.2px;height:59.2px;background:#f0f0f0"></div>
<div class="a m" style="left:36.8px;top:3561.6px">Command &gt;</div>
<svg class="a" style="left:4148.8px;top:3572px" width="32" height="24" viewBox="0 0 4 3"><path d="M0.4 0.5l1.6 1.7l1.6-1.7" fill="none" stroke="#444" stroke-width="0.6"/></svg>
<div class="a m" style="left:4310.4px;top:3179.2px">View</div><div class="hl" style="left:4404px;top:3201.6px;width:968px"></div>
<svg class="a" style="left:5384px;top:3168px" width="208" height="64" viewBox="673 396 26 8" fill="none" stroke="#111" stroke-width="0.7"><path d="M676.2 402h2.6" stroke-width="0.9"/><rect x="684.6" y="399.4" width="2.6" height="2.6"/><path d="M685.6 399.4v-1h2.6v2.6h-1"/><path d="M692.4 398.7l3.4 3.4M695.8 398.7l-3.4 3.4" stroke-width="0.8"/></svg>
<div class="a" style="left:4226.4px;top:3160px;width:5.6px;height:472px;background:#dadada"></div>
<svg class="a" style="left:4262.4px;top:3252px" width="1331.2" height="383.2" viewBox="532.8 406.5 166.4 47.9"><rect x="532.8" y="406.5" width="166.4" height="47.9" fill="#000"/><g fill="none" stroke="#dedede" stroke-width="0.65"><rect x="562.6" y="407.6" width="41.3" height="44.8" rx="2.6"/><path d="M603.9 412.3h-25v30.6h25"/><rect x="580.6" y="417.9" width="4.9" height="3.1" rx="1.2"/></g><rect x="571.2" y="436.2" width="0.9" height="0.9" fill="#ddd"/><rect x="571.2" y="440.6" width="0.9" height="0.9" fill="#ddd"/><rect x="697.4" y="406.5" width="1.8" height="47.9" fill="#9a9a9a"/></svg>
<div class="a" style="left:0;top:3636.8px;width:6920px;height:4.8px;background:#dcdcdc"></div>
<div class="a m" style="left:12px;top:3682.4px">derive connectivity</div>
<div class="a" style="left:610.4px;top:3664px;width:580px;height:78.4px;background:#00ff00"></div>
<div class="a m" style="left:1804.8px;top:3682.4px;font-weight:normal">L4</div>
<div class="a m" style="left:2402.4px;top:3682.4px;font-weight:normal">-151.660, 54.897</div>
<div class="btn m" style="left:3013.6px;top:3665.6px;width:74.4px;height:68.8px;line-height:60.8px;border-color:#999;background:#e4e4e4">mm</div>
<div class="btn m" style="left:3132.8px;top:3665.6px;width:59.2px;height:68.8px;line-height:60.8px;border-color:#999;background:#e4e4e4">P</div>
<div class="btn m" style="left:3235.2px;top:3665.6px;width:64.8px;height:68.8px;line-height:60.8px;border-color:#999;background:#e4e4e4">A</div>
<div class="a m" style="left:4533.6px;top:3682.4px;font-weight:normal">None</div><div class="a m" style="left:5133.6px;top:3682.4px;font-weight:normal;color:#666">N/A</div>
<div class="a" style="left:5724px;top:3662.4px;width:585.6px;height:89.6px;background:#ffff00"></div><div class="a m" style="left:5736px;top:3682.4px">DRC</div><div class="a m" style="left:6339.2px;top:3682.4px;font-weight:normal">0</div>
<div class="a" style="left:1794.4px;top:3656px;width:4px;height:88px;background:#fafafa;box-shadow:-4px 0 0 #d4d4d4"></div>
<div class="a" style="left:2396.8px;top:3656px;width:4px;height:88px;background:#fafafa;box-shadow:-4px 0 0 #d4d4d4"></div>
<div class="a" style="left:2994.4px;top:3656px;width:4px;height:88px;background:#fafafa;box-shadow:-4px 0 0 #d4d4d4"></div>
<div class="a" style="left:3324px;top:3656px;width:4px;height:88px;background:#fafafa;box-shadow:-4px 0 0 #d4d4d4"></div>
<div class="a" style="left:4514.4px;top:3656px;width:4px;height:88px;background:#fafafa;box-shadow:-4px 0 0 #d4d4d4"></div>
<div class="a" style="left:5116.8px;top:3656px;width:4px;height:88px;background:#fafafa;box-shadow:-4px 0 0 #d4d4d4"></div>
<div class="a" style="left:5708.8px;top:3656px;width:4px;height:88px;background:#fafafa;box-shadow:-4px 0 0 #d4d4d4"></div>
<div class="a" style="left:6321.6px;top:3656px;width:4px;height:88px;background:#fafafa;box-shadow:-4px 0 0 #d4d4d4"></div><svg id="pcb" viewBox="126.3 50.8 572.2 340.8" width="4577.6" height="2726.4" style="position:absolute;left:1010.4px;top:406.4px;background:#1c1c1c" shape-rendering="geometricPrecision">
<defs><pattern id="hx" width="2.2" height="2.2" patternUnits="userSpaceOnUse" patternTransform="rotate(45)"><rect width="2.2" height="2.2" fill="#252525"/><rect width="2.2" height="0.9" fill="#1d1d1d"/><rect width="0.9" height="2.2" fill="#1d1d1d"/></pattern></defs>
<rect x="120" y="45" width="590" height="355" fill="#1b1b1b"/>
<g fill="url(#hx)"><rect x="449.7" y="59.9" width="50.5" height="83.1"/><rect x="535.7" y="53.4" width="170" height="345"/><rect x="495.3" y="289.7" width="52.2" height="80.1"/><rect x="400" y="355.7" width="50" height="40"/></g>
<circle cx="108.4" cy="167.3" r="131" fill="url(#hx)"/>
<circle cx="108.4" cy="167.3" r="130.3" fill="none" stroke="#3f8496" stroke-width="0.7"/>
<circle cx="108.4" cy="167.3" r="113.3" fill="#8a8a8a"/>
<circle cx="108.4" cy="167.3" r="110.3" fill="#808080"/>
<g fill="none" stroke="#a890a8" stroke-width="0.6"><circle cx="164.6" cy="90.7" r="7"/><circle cx="129.4" cy="102.5" r="6.5"/><circle cx="165.5" cy="242.6" r="6.4"/><circle cx="129.3" cy="232" r="6"/><circle cx="163.4" cy="207.7" r="6"/></g>
<g><circle cx="266.6" cy="54.4" r="13.6" fill="#666666"/>
<circle cx="306.0" cy="111.0" r="12.8" fill="#666666"/>
<circle cx="290.7" cy="197.3" r="12.8" fill="#666666"/>
<rect x="277.5" y="240.2" width="26.1" height="29.1" rx="4.8" fill="#666666"/>
<rect x="261.2" y="245.7" width="24.6" height="18.1" rx="1.8" fill="#666666"/>
<rect x="278.5" y="277.5" width="25.5" height="28.7" rx="4.8" fill="#666666"/>
<rect x="261.2" y="282.7" width="24.6" height="18.6" rx="1.8" fill="#666666"/>
<rect x="247.8" y="307.4" width="26.2" height="29.3" rx="4.8" fill="#666666"/>
<rect x="278.5" y="307.4" width="25.5" height="29.3" rx="4.8" fill="#666666"/>
<rect x="261.2" y="312.2" width="24.6" height="19.6" rx="1.8" fill="#666666"/>
<rect x="247.8" y="337.0" width="26.2" height="29.7" rx="4.8" fill="#666666"/>
<rect x="278.5" y="337.0" width="25.5" height="29.7" rx="4.8" fill="#666666"/>
<rect x="261.2" y="342.2" width="24.6" height="19.6" rx="1.8" fill="#666666"/>
<polyline points="261.2,318.0 261.2,358.0 248.0,379.4" fill="none" stroke="#666666" stroke-width="20.6" stroke-linejoin="round" stroke-linecap="round"/>
<circle cx="248.0" cy="379.4" r="12.4" fill="#666666"/>
<circle cx="277.9" cy="379.4" r="12.4" fill="#666666"/>
<circle cx="286.6" cy="233.1" r="12.1" fill="#666666"/>
<rect x="273.2" y="200.2" width="38.6" height="46.6" rx="4.8" fill="#666666"/>
<polyline points="290.7,197.3 302.0,210.7 302.0,245.9 291.3,255.0 326.5,255.0" fill="none" stroke="#666666" stroke-width="11.9" stroke-linejoin="round" stroke-linecap="round"/>
<polyline points="291.3,292.8 320.1,292.8 329.0,301.0" fill="none" stroke="#666666" stroke-width="12.1" stroke-linejoin="round" stroke-linecap="round"/>
<polyline points="291.3,297.0 291.3,322.7" fill="none" stroke="#666666" stroke-width="12.1" stroke-linejoin="round" stroke-linecap="round"/>
<polyline points="291.3,351.6 319.0,351.6 319.0,382.0 324.5,387.5 374.5,387.5 391.8,372.5" fill="none" stroke="#666666" stroke-width="12.1" stroke-linejoin="round" stroke-linecap="round"/>
<polyline points="291.3,351.6 291.8,395.0" fill="none" stroke="#666666" stroke-width="12.1" stroke-linejoin="round" stroke-linecap="round"/>
<circle cx="314.9" cy="327.8" r="12.4" fill="#666666"/>
<rect x="305.6" y="338.9" width="26.2" height="29.7" rx="4.8" fill="#666666"/>
<rect x="333.8" y="337.8" width="28.7" height="31.9" rx="4.8" fill="#666666"/>
<rect x="319.2" y="344.2" width="26.6" height="19.1" rx="1.8" fill="#666666"/>
<rect x="312.3" y="206.0" width="34.9" height="20.6" rx="4.8" fill="#666666"/>
<rect x="312.3" y="224.2" width="34.9" height="21.0" rx="4.8" fill="#666666"/>
<rect x="312.3" y="242.7" width="34.9" height="21.2" rx="4.8" fill="#666666"/>
<rect x="312.3" y="261.3" width="34.9" height="20.8" rx="4.8" fill="#666666"/>
<rect x="311.8" y="279.8" width="35.2" height="35.1" rx="4.8" fill="#666666"/>
<rect x="346.2" y="208.2" width="74.6" height="71.6" rx="3.8" fill="#666666"/>
<rect x="344.6" y="280.2" width="21.0" height="32.5" rx="4.8" fill="#666666"/>
<rect x="362.2" y="279.0" width="21.8" height="35.2" rx="4.8" fill="#666666"/>
<rect x="381.2" y="279.0" width="21.8" height="35.2" rx="4.8" fill="#666666"/>
<rect x="399.7" y="279.0" width="21.3" height="35.2" rx="4.8" fill="#666666"/>
<rect x="362.2" y="283.2" width="90.6" height="33.1" rx="3.8" fill="#666666"/>
<circle cx="370.8" cy="327.4" r="12.4" fill="#666666"/>
<polyline points="370.8,298.0 370.8,327.4" fill="none" stroke="#666666" stroke-width="11.9" stroke-linejoin="round" stroke-linecap="round"/>
<polygon points="372.3,313.9 378.0,324.7 363.6,324.7 369.3,313.9" fill="#666666" stroke="#666666" stroke-width="8.1" stroke-linejoin="round"/>
<circle cx="408.0" cy="327.4" r="12.4" fill="#666666"/>
<polyline points="408.0,298.0 408.0,327.4" fill="none" stroke="#666666" stroke-width="11.9" stroke-linejoin="round" stroke-linecap="round"/>
<polygon points="409.5,313.9 415.2,324.7 400.8,324.7 406.5,313.9" fill="#666666" stroke="#666666" stroke-width="8.1" stroke-linejoin="round"/>
<polyline points="389.5,298.0 389.5,332.3 397.2,341.3 397.2,395.0" fill="none" stroke="#666666" stroke-width="11.9" stroke-linejoin="round" stroke-linecap="round"/>
<rect x="371.9" y="355.1" width="43.8" height="34.3" rx="4.8" fill="#666666"/>
<rect x="418.1" y="205.4" width="34.9" height="20.8" rx="4.8" fill="#666666"/>
<rect x="418.1" y="224.1" width="34.9" height="21.3" rx="4.8" fill="#666666"/>
<rect x="418.1" y="242.7" width="34.9" height="21.1" rx="4.8" fill="#666666"/>
<rect x="418.1" y="261.1" width="34.9" height="21.3" rx="4.8" fill="#666666"/>
<rect x="418.0" y="279.7" width="35.2" height="35.3" rx="4.8" fill="#666666"/>
<polyline points="432.5,298.0 438.8,303.5 438.8,327.3" fill="none" stroke="#666666" stroke-width="11.9" stroke-linejoin="round" stroke-linecap="round"/>
<circle cx="438.8" cy="327.3" r="12.4" fill="#666666"/>
<polygon points="440.3,313.8 446.0,324.6 431.6,324.6 437.3,313.8" fill="#666666" stroke="#666666" stroke-width="8.1" stroke-linejoin="round"/>
<rect x="467.6" y="216.4" width="26.0" height="29.5" rx="4.8" fill="#666666"/>
<rect x="467.6" y="246.2" width="26.0" height="29.5" rx="4.8" fill="#666666"/>
<rect x="496.2" y="215.3" width="28.8" height="31.7" rx="4.8" fill="#666666"/>
<rect x="496.2" y="245.1" width="28.8" height="31.7" rx="4.8" fill="#666666"/>
<rect x="479.2" y="221.2" width="31.6" height="19.6" rx="1.8" fill="#666666"/>
<rect x="479.2" y="251.2" width="31.6" height="19.6" rx="1.8" fill="#666666"/>
<circle cx="460.3" cy="254.6" r="12.1" fill="#666666"/>
<rect x="444.2" y="205.2" width="31.6" height="75.6" rx="2.8" fill="#666666"/>
<rect x="467.2" y="216.2" width="57.1" height="59.6" rx="3.8" fill="#666666"/>
<polyline points="432.0,217.5 465.1,217.5 481.4,201.9" fill="none" stroke="#666666" stroke-width="12.6" stroke-linejoin="round" stroke-linecap="round"/>
<polyline points="432.0,236.0 472.7,236.0 481.4,230.8" fill="none" stroke="#666666" stroke-width="12.6" stroke-linejoin="round" stroke-linecap="round"/>
<polyline points="432.0,254.6 460.3,254.6" fill="none" stroke="#666666" stroke-width="12.6" stroke-linejoin="round" stroke-linecap="round"/>
<polygon points="446.8,253.1 457.6,247.4 457.6,261.8 446.8,256.1" fill="#666666" stroke="#666666" stroke-width="8.1" stroke-linejoin="round"/>
<polyline points="432.0,273.0 468.0,273.0 481.4,260.9" fill="none" stroke="#666666" stroke-width="12.6" stroke-linejoin="round" stroke-linecap="round"/>
<rect x="527.1" y="246.2" width="25.6" height="29.5" rx="4.8" fill="#666666"/>
<rect x="539.2" y="251.2" width="23.6" height="19.6" rx="1.8" fill="#666666"/>
<polyline points="540.5,260.9 526.5,273.4 526.5,296.0" fill="none" stroke="#666666" stroke-width="12.6" stroke-linejoin="round" stroke-linecap="round"/>
<circle cx="526.5" cy="296.0" r="12.1" fill="#666666"/>
<polygon points="528.0,282.5 533.7,293.3 519.3,293.3 525.0,282.5" fill="#666666" stroke="#666666" stroke-width="8.1" stroke-linejoin="round"/>
<rect x="462.0" y="292.2" width="46.2" height="26.8" rx="4.8" fill="#666666"/>
<polyline points="484.8,305.5 515.0,305.5 526.5,296.0" fill="none" stroke="#666666" stroke-width="13.6" stroke-linejoin="round" stroke-linecap="round"/>
<polygon points="516.3,302.5 519.9,292.2 529.0,303.2 518.2,304.8" fill="#666666" stroke="#666666" stroke-width="8.1" stroke-linejoin="round"/>
<rect x="533.8" y="315.6" width="46.2" height="27.5" rx="4.8" fill="#666666"/>
<circle cx="526.9" cy="329.8" r="12.1" fill="#666666"/>
<polyline points="526.9,329.8 558.7,329.8" fill="none" stroke="#666666" stroke-width="12.6" stroke-linejoin="round" stroke-linecap="round"/>
<polygon points="540.4,331.3 529.6,337.0 529.6,322.6 540.4,328.3" fill="#666666" stroke="#666666" stroke-width="8.1" stroke-linejoin="round"/>
<rect x="462.0" y="339.9" width="46.2" height="27.7" rx="4.8" fill="#666666"/>
<polyline points="482.8,353.6 515.5,353.6" fill="none" stroke="#666666" stroke-width="20.6" stroke-linejoin="round" stroke-linecap="round"/>
<circle cx="515.5" cy="353.6" r="12.4" fill="#666666"/>
<rect x="433.0" y="379.8" width="43.8" height="20.4" rx="4.8" fill="#666666"/>
<rect x="484.2" y="380.8" width="29.7" height="19.4" rx="4.8" fill="#666666"/>
<rect x="422.5" y="59.1" width="43.5" height="34.3" rx="4.8" fill="#666666"/>
<rect x="422.5" y="108.1" width="43.5" height="33.3" rx="4.8" fill="#666666"/>
<rect x="421.4" y="79.7" width="29.9" height="40.6" rx="3.8" fill="#666666"/>
<polygon points="489.0,44.0 497.0,55.5 705.0,55.5 705.0,44.0" fill="#666666" stroke="#666666" stroke-width="1.7" stroke-linejoin="miter"/>
<polyline points="420.0,72.9 441.1,72.9 444.6,76.8 444.6,123.8 431.5,137.2 420.0,147.0" fill="none" stroke="#666666" stroke-width="12.6" stroke-linejoin="round" stroke-linecap="round"/>
<rect x="483.3" y="83.7" width="44.1" height="34.1" rx="4.8" fill="#666666"/>
<circle cx="505.4" cy="74.9" r="12.1" fill="#666666"/>
<polygon points="503.9,88.4 498.2,77.6 512.6,77.6 506.9,88.4" fill="#666666" stroke="#666666" stroke-width="8.1" stroke-linejoin="round"/>
<polyline points="505.4,74.9 505.4,100.8" fill="none" stroke="#666666" stroke-width="12.6" stroke-linejoin="round" stroke-linecap="round"/>
<polyline points="505.4,97.0 518.8,93.0 539.9,71.6 702.0,71.4" fill="none" stroke="#666666" stroke-width="12.6" stroke-linejoin="round" stroke-linecap="round"/>
<circle cx="497.7" cy="143.4" r="12.1" fill="#666666"/>
<polyline points="497.7,143.4 511.1,156.9 511.1,204.0" fill="none" stroke="#666666" stroke-width="21.6" stroke-linejoin="round" stroke-linecap="round"/>
<rect x="468.0" y="156.1" width="25.6" height="29.9" rx="4.8" fill="#666666"/>
<rect x="497.3" y="156.1" width="26.6" height="29.9" rx="4.8" fill="#666666"/>
<rect x="468.0" y="186.2" width="25.6" height="29.5" rx="4.8" fill="#666666"/>
<rect x="497.3" y="186.2" width="26.6" height="29.5" rx="4.8" fill="#666666"/>
<rect x="479.2" y="161.2" width="31.6" height="20.1" rx="1.8" fill="#666666"/>
<rect x="479.2" y="191.2" width="31.6" height="19.6" rx="1.8" fill="#666666"/>
<polyline points="481.4,171.2 459.3,192.3 433.4,192.3" fill="none" stroke="#666666" stroke-width="12.6" stroke-linejoin="round" stroke-linecap="round"/>
<rect x="467.2" y="155.7" width="57.6" height="60.6" rx="3.8" fill="#666666"/>
<rect x="415.8" y="173.4" width="37.2" height="34.7" rx="4.8" fill="#666666"/>
<polygon points="526.6,131.0 547.7,109.0 644.3,109.0 644.3,152.0 545.0,152.0 526.6,135.0" fill="#666666" stroke="#666666" stroke-width="11.6" stroke-linejoin="miter"/>
<circle cx="554.9" cy="105.5" r="12.1" fill="#666666"/>
<circle cx="554.9" cy="136.1" r="12.1" fill="#666666"/>
<rect x="567.2" y="143.2" width="22.8" height="14.6" rx="0.8" fill="#666666"/>
<rect x="596.5" y="155.0" width="47.5" height="36.3" rx="4.8" fill="#666666"/>
<rect x="595.7" y="190.1" width="48.7" height="40.5" rx="4.8" fill="#666666"/>
<polyline points="621.4,210.2 632.9,210.2 651.7,229.3" fill="none" stroke="#666666" stroke-width="12.6" stroke-linejoin="round" stroke-linecap="round"/>
<circle cx="651.7" cy="229.3" r="12.1" fill="#666666"/>
<polygon points="644.4,219.7 654.9,222.4 644.7,232.4 642.2,221.8" fill="#666666" stroke="#666666" stroke-width="8.1" stroke-linejoin="round"/>
<circle cx="618.3" cy="350.2" r="12.1" fill="#666666"/>
<polygon points="616.8,363.7 611.1,352.9 625.5,352.9 619.8,363.7" fill="#666666" stroke="#666666" stroke-width="8.1" stroke-linejoin="round"/>
<rect x="597.3" y="358.6" width="40.8" height="41.6" rx="4.8" fill="#666666"/>
<rect x="636.8" y="358.6" width="37.3" height="41.6" rx="4.8" fill="#666666"/>
<polyline points="618.3,350.2 618.3,380.0 606.0,395.0" fill="none" stroke="#666666" stroke-width="12.6" stroke-linejoin="round" stroke-linecap="round"/>
<polygon points="705.0,100.0 699.0,100.0 690.5,109.0 690.5,150.0 705.0,150.0" fill="#666666" stroke="#666666" stroke-width="1.7" stroke-linejoin="miter"/>
<rect x="114.7" y="325.0" width="33.0" height="76.3" rx="4.8" fill="#666666"/></g>
<g><circle cx="266.6" cy="54.4" r="12.8" fill="#000"/>
<circle cx="306.0" cy="111.0" r="12.0" fill="#000"/>
<circle cx="290.7" cy="197.3" r="12.0" fill="#000"/>
<rect x="278.3" y="241.0" width="24.5" height="27.5" rx="4.0" fill="#000"/>
<rect x="262.0" y="246.5" width="23.0" height="16.5" rx="1.0" fill="#000"/>
<rect x="279.3" y="278.3" width="23.9" height="27.1" rx="4.0" fill="#000"/>
<rect x="262.0" y="283.5" width="23.0" height="17.0" rx="1.0" fill="#000"/>
<rect x="248.6" y="308.2" width="24.6" height="27.7" rx="4.0" fill="#000"/>
<rect x="279.3" y="308.2" width="23.9" height="27.7" rx="4.0" fill="#000"/>
<rect x="262.0" y="313.0" width="23.0" height="18.0" rx="1.0" fill="#000"/>
<rect x="248.6" y="337.8" width="24.6" height="28.1" rx="4.0" fill="#000"/>
<rect x="279.3" y="337.8" width="23.9" height="28.1" rx="4.0" fill="#000"/>
<rect x="262.0" y="343.0" width="23.0" height="18.0" rx="1.0" fill="#000"/>
<polyline points="261.2,318.0 261.2,358.0 248.0,379.4" fill="none" stroke="#000" stroke-width="19.0" stroke-linejoin="round" stroke-linecap="round"/>
<circle cx="248.0" cy="379.4" r="11.6" fill="#000"/>
<circle cx="277.9" cy="379.4" r="11.6" fill="#000"/>
<circle cx="286.6" cy="233.1" r="11.3" fill="#000"/>
<rect x="274.0" y="201.0" width="37.0" height="45.0" rx="4.0" fill="#000"/>
<polyline points="290.7,197.3 302.0,210.7 302.0,245.9 291.3,255.0 326.5,255.0" fill="none" stroke="#000" stroke-width="10.3" stroke-linejoin="round" stroke-linecap="round"/>
<polyline points="291.3,292.8 320.1,292.8 329.0,301.0" fill="none" stroke="#000" stroke-width="10.5" stroke-linejoin="round" stroke-linecap="round"/>
<polyline points="291.3,297.0 291.3,322.7" fill="none" stroke="#000" stroke-width="10.5" stroke-linejoin="round" stroke-linecap="round"/>
<polyline points="291.3,351.6 319.0,351.6 319.0,382.0 324.5,387.5 374.5,387.5 391.8,372.5" fill="none" stroke="#000" stroke-width="10.5" stroke-linejoin="round" stroke-linecap="round"/>
<polyline points="291.3,351.6 291.8,395.0" fill="none" stroke="#000" stroke-width="10.5" stroke-linejoin="round" stroke-linecap="round"/>
<circle cx="314.9" cy="327.8" r="11.6" fill="#000"/>
<rect x="306.4" y="339.7" width="24.6" height="28.1" rx="4.0" fill="#000"/>
<rect x="334.6" y="338.6" width="27.1" height="30.3" rx="4.0" fill="#000"/>
<rect x="320.0" y="345.0" width="25.0" height="17.5" rx="1.0" fill="#000"/>
<rect x="313.1" y="206.8" width="33.3" height="19.0" rx="4.0" fill="#000"/>
<rect x="313.1" y="225.0" width="33.3" height="19.4" rx="4.0" fill="#000"/>
<rect x="313.1" y="243.5" width="33.3" height="19.6" rx="4.0" fill="#000"/>
<rect x="313.1" y="262.1" width="33.3" height="19.2" rx="4.0" fill="#000"/>
<rect x="312.6" y="280.6" width="33.6" height="33.5" rx="4.0" fill="#000"/>
<rect x="347.0" y="209.0" width="73.0" height="70.0" rx="3.0" fill="#000"/>
<rect x="345.4" y="281.0" width="19.4" height="30.9" rx="4.0" fill="#000"/>
<rect x="363.0" y="279.8" width="20.2" height="33.6" rx="4.0" fill="#000"/>
<rect x="382.0" y="279.8" width="20.2" height="33.6" rx="4.0" fill="#000"/>
<rect x="400.5" y="279.8" width="19.7" height="33.6" rx="4.0" fill="#000"/>
<rect x="363.0" y="284.0" width="89.0" height="31.5" rx="3.0" fill="#000"/>
<circle cx="370.8" cy="327.4" r="11.6" fill="#000"/>
<polyline points="370.8,298.0 370.8,327.4" fill="none" stroke="#000" stroke-width="10.3" stroke-linejoin="round" stroke-linecap="round"/>
<polygon points="372.3,313.9 378.0,324.7 363.6,324.7 369.3,313.9" fill="#000" stroke="#000" stroke-width="6.5" stroke-linejoin="round"/>
<circle cx="408.0" cy="327.4" r="11.6" fill="#000"/>
<polyline points="408.0,298.0 408.0,327.4" fill="none" stroke="#000" stroke-width="10.3" stroke-linejoin="round" stroke-linecap="round"/>
<polygon points="409.5,313.9 415.2,324.7 400.8,324.7 406.5,313.9" fill="#000" stroke="#000" stroke-width="6.5" stroke-linejoin="round"/>
<polyline points="389.5,298.0 389.5,332.3 397.2,341.3 397.2,395.0" fill="none" stroke="#000" stroke-width="10.3" stroke-linejoin="round" stroke-linecap="round"/>
<rect x="372.7" y="355.9" width="42.2" height="32.7" rx="4.0" fill="#000"/>
<rect x="418.9" y="206.2" width="33.3" height="19.2" rx="4.0" fill="#000"/>
<rect x="418.9" y="224.9" width="33.3" height="19.7" rx="4.0" fill="#000"/>
<rect x="418.9" y="243.5" width="33.3" height="19.5" rx="4.0" fill="#000"/>
<rect x="418.9" y="261.9" width="33.3" height="19.7" rx="4.0" fill="#000"/>
<rect x="418.8" y="280.5" width="33.6" height="33.7" rx="4.0" fill="#000"/>
<polyline points="432.5,298.0 438.8,303.5 438.8,327.3" fill="none" stroke="#000" stroke-width="10.3" stroke-linejoin="round" stroke-linecap="round"/>
<circle cx="438.8" cy="327.3" r="11.6" fill="#000"/>
<polygon points="440.3,313.8 446.0,324.6 431.6,324.6 437.3,313.8" fill="#000" stroke="#000" stroke-width="6.5" stroke-linejoin="round"/>
<rect x="468.4" y="217.2" width="24.4" height="27.9" rx="4.0" fill="#000"/>
<rect x="468.4" y="247.0" width="24.4" height="27.9" rx="4.0" fill="#000"/>
<rect x="497.0" y="216.1" width="27.2" height="30.1" rx="4.0" fill="#000"/>
<rect x="497.0" y="245.9" width="27.2" height="30.1" rx="4.0" fill="#000"/>
<rect x="480.0" y="222.0" width="30.0" height="18.0" rx="1.0" fill="#000"/>
<rect x="480.0" y="252.0" width="30.0" height="18.0" rx="1.0" fill="#000"/>
<circle cx="460.3" cy="254.6" r="11.3" fill="#000"/>
<rect x="445.0" y="206.0" width="30.0" height="74.0" rx="2.0" fill="#000"/>
<rect x="468.0" y="217.0" width="55.5" height="58.0" rx="3.0" fill="#000"/>
<polyline points="432.0,217.5 465.1,217.5 481.4,201.9" fill="none" stroke="#000" stroke-width="11.0" stroke-linejoin="round" stroke-linecap="round"/>
<polyline points="432.0,236.0 472.7,236.0 481.4,230.8" fill="none" stroke="#000" stroke-width="11.0" stroke-linejoin="round" stroke-linecap="round"/>
<polyline points="432.0,254.6 460.3,254.6" fill="none" stroke="#000" stroke-width="11.0" stroke-linejoin="round" stroke-linecap="round"/>
<polygon points="446.8,253.1 457.6,247.4 457.6,261.8 446.8,256.1" fill="#000" stroke="#000" stroke-width="6.5" stroke-linejoin="round"/>
<polyline points="432.0,273.0 468.0,273.0 481.4,260.9" fill="none" stroke="#000" stroke-width="11.0" stroke-linejoin="round" stroke-linecap="round"/>
<rect x="527.9" y="247.0" width="24.0" height="27.9" rx="4.0" fill="#000"/>
<rect x="540.0" y="252.0" width="22.0" height="18.0" rx="1.0" fill="#000"/>
<polyline points="540.5,260.9 526.5,273.4 526.5,296.0" fill="none" stroke="#000" stroke-width="11.0" stroke-linejoin="round" stroke-linecap="round"/>
<circle cx="526.5" cy="296.0" r="11.3" fill="#000"/>
<polygon points="528.0,282.5 533.7,293.3 519.3,293.3 525.0,282.5" fill="#000" stroke="#000" stroke-width="6.5" stroke-linejoin="round"/>
<rect x="462.8" y="293.0" width="44.6" height="25.2" rx="4.0" fill="#000"/>
<polyline points="484.8,305.5 515.0,305.5 526.5,296.0" fill="none" stroke="#000" stroke-width="12.0" stroke-linejoin="round" stroke-linecap="round"/>
<polygon points="516.3,302.5 519.9,292.2 529.0,303.2 518.2,304.8" fill="#000" stroke="#000" stroke-width="6.5" stroke-linejoin="round"/>
<rect x="534.6" y="316.4" width="44.6" height="25.9" rx="4.0" fill="#000"/>
<circle cx="526.9" cy="329.8" r="11.3" fill="#000"/>
<polyline points="526.9,329.8 558.7,329.8" fill="none" stroke="#000" stroke-width="11.0" stroke-linejoin="round" stroke-linecap="round"/>
<polygon points="540.4,331.3 529.6,337.0 529.6,322.6 540.4,328.3" fill="#000" stroke="#000" stroke-width="6.5" stroke-linejoin="round"/>
<rect x="462.8" y="340.7" width="44.6" height="26.1" rx="4.0" fill="#000"/>
<polyline points="482.8,353.6 515.5,353.6" fill="none" stroke="#000" stroke-width="19.0" stroke-linejoin="round" stroke-linecap="round"/>
<circle cx="515.5" cy="353.6" r="11.6" fill="#000"/>
<rect x="433.8" y="380.6" width="42.2" height="18.8" rx="4.0" fill="#000"/>
<rect x="485.0" y="381.6" width="28.1" height="17.8" rx="4.0" fill="#000"/>
<rect x="423.3" y="59.9" width="41.9" height="32.7" rx="4.0" fill="#000"/>
<rect x="423.3" y="108.9" width="41.9" height="31.7" rx="4.0" fill="#000"/>
<rect x="422.2" y="80.5" width="28.3" height="39.0" rx="3.0" fill="#000"/>
<polygon points="489.0,44.0 497.0,55.5 705.0,55.5 705.0,44.0" fill="#000" stroke="#000" stroke-width="0.1" stroke-linejoin="miter"/>
<polyline points="420.0,72.9 441.1,72.9 444.6,76.8 444.6,123.8 431.5,137.2 420.0,147.0" fill="none" stroke="#000" stroke-width="11.0" stroke-linejoin="round" stroke-linecap="round"/>
<rect x="484.1" y="84.5" width="42.5" height="32.5" rx="4.0" fill="#000"/>
<circle cx="505.4" cy="74.9" r="11.3" fill="#000"/>
<polygon points="503.9,88.4 498.2,77.6 512.6,77.6 506.9,88.4" fill="#000" stroke="#000" stroke-width="6.5" stroke-linejoin="round"/>
<polyline points="505.4,74.9 505.4,100.8" fill="none" stroke="#000" stroke-width="11.0" stroke-linejoin="round" stroke-linecap="round"/>
<polyline points="505.4,97.0 518.8,93.0 539.9,71.6 702.0,71.4" fill="none" stroke="#000" stroke-width="11.0" stroke-linejoin="round" stroke-linecap="round"/>
<circle cx="497.7" cy="143.4" r="11.3" fill="#000"/>
<polyline points="497.7,143.4 511.1,156.9 511.1,204.0" fill="none" stroke="#000" stroke-width="20.0" stroke-linejoin="round" stroke-linecap="round"/>
<rect x="468.8" y="156.9" width="24.0" height="28.3" rx="4.0" fill="#000"/>
<rect x="498.1" y="156.9" width="25.0" height="28.3" rx="4.0" fill="#000"/>
<rect x="468.8" y="187.0" width="24.0" height="27.9" rx="4.0" fill="#000"/>
<rect x="498.1" y="187.0" width="25.0" height="27.9" rx="4.0" fill="#000"/>
<rect x="480.0" y="162.0" width="30.0" height="18.5" rx="1.0" fill="#000"/>
<rect x="480.0" y="192.0" width="30.0" height="18.0" rx="1.0" fill="#000"/>
<polyline points="481.4,171.2 459.3,192.3 433.4,192.3" fill="none" stroke="#000" stroke-width="11.0" stroke-linejoin="round" stroke-linecap="round"/>
<rect x="468.0" y="156.5" width="56.0" height="59.0" rx="3.0" fill="#000"/>
<rect x="416.6" y="174.2" width="35.6" height="33.1" rx="4.0" fill="#000"/>
<polygon points="526.6,131.0 547.7,109.0 644.3,109.0 644.3,152.0 545.0,152.0 526.6,135.0" fill="#000" stroke="#000" stroke-width="10.0" stroke-linejoin="miter"/>
<circle cx="554.9" cy="105.5" r="11.3" fill="#000"/>
<circle cx="554.9" cy="136.1" r="11.3" fill="#000"/>
<rect x="568.0" y="144.0" width="21.2" height="13.0" rx="0.0" fill="#000"/>
<rect x="597.3" y="155.8" width="45.9" height="34.7" rx="4.0" fill="#000"/>
<rect x="596.5" y="190.9" width="47.1" height="38.9" rx="4.0" fill="#000"/>
<polyline points="621.4,210.2 632.9,210.2 651.7,229.3" fill="none" stroke="#000" stroke-width="11.0" stroke-linejoin="round" stroke-linecap="round"/>
<circle cx="651.7" cy="229.3" r="11.3" fill="#000"/>
<polygon points="644.4,219.7 654.9,222.4 644.7,232.4 642.2,221.8" fill="#000" stroke="#000" stroke-width="6.5" stroke-linejoin="round"/>
<circle cx="618.3" cy="350.2" r="11.3" fill="#000"/>
<polygon points="616.8,363.7 611.1,352.9 625.5,352.9 619.8,363.7" fill="#000" stroke="#000" stroke-width="6.5" stroke-linejoin="round"/>
<rect x="598.1" y="359.4" width="39.2" height="40.0" rx="4.0" fill="#000"/>
<rect x="637.6" y="359.4" width="35.7" height="40.0" rx="4.0" fill="#000"/>
<polyline points="618.3,350.2 618.3,380.0 606.0,395.0" fill="none" stroke="#000" stroke-width="11.0" stroke-linejoin="round" stroke-linecap="round"/>
<polygon points="705.0,100.0 699.0,100.0 690.5,109.0 690.5,150.0 705.0,150.0" fill="#000" stroke="#000" stroke-width="0.1" stroke-linejoin="miter"/>
<rect x="115.5" y="325.8" width="31.4" height="74.7" rx="4.0" fill="#000"/></g>
<g><polygon points="526.6,131.0 547.7,109.0 644.3,109.0 644.3,152.0 545.0,152.0 526.6,135.0" fill="#3b0000" stroke="#b00000" stroke-width="0.6"/>
<polygon points="705,104 700,104 694,110 694,147 705,147" fill="#3b0000" stroke="#b00000" stroke-width="0.6"/>
<rect x="120" y="330.3" width="22.4" height="70" rx="2" fill="#2c0000" stroke="#700000" stroke-width="0.5"/></g>
<g><rect x="252.9" y="244.8" width="17.0" height="20.0" fill="#767676"/>
<circle cx="237.1" cy="254.6" r="8.3" fill="#767676"/><circle cx="237.1" cy="254.6" r="4" fill="#8a8a8a"/>
<polyline points="237.1,254.6 261.0,254.6" fill="none" stroke="#868686" stroke-width="7" stroke-linejoin="round" stroke-linecap="round"/>
<rect x="252.9" y="281.8" width="17.0" height="20.5" fill="#808080"/>
<circle cx="338.7" cy="327.8" r="8" fill="#717171"/><circle cx="338.7" cy="327.8" r="4" fill="#8e8e8e"/>
<rect x="339.1" y="343.1" width="18.1" height="21.3" fill="#808080"/>
<rect x="349" y="210.7" width="69.2" height="66.7" rx="2.5" fill="#7a7a7a" stroke="#2e2e2e" stroke-width="2"/>
<circle cx="361.7" cy="264.0" r="8" fill="#8d8d8d"/><circle cx="361.7" cy="264.0" r="4" fill="#9a9a9a"/>
<circle cx="398.6" cy="264.0" r="8" fill="#8d8d8d"/><circle cx="398.6" cy="264.0" r="4" fill="#9a9a9a"/>
<rect x="348.4" y="284.0" width="13.4" height="24.9" fill="#808080"/>
<polyline points="355.0,277.0 355.0,290.0" fill="none" stroke="#808080" stroke-width="12" stroke-linejoin="round" stroke-linecap="round"/>
<circle cx="420.8" cy="352.8" r="7.7" fill="#717171"/><circle cx="420.8" cy="352.8" r="4" fill="#8e8e8e"/>
<circle cx="452.4" cy="352.6" r="7.7" fill="#717171"/><circle cx="452.4" cy="352.6" r="4" fill="#8e8e8e"/>
<rect x="501.5" y="220.6" width="18.2" height="21.1" fill="#808080"/>
<rect x="501.5" y="250.4" width="18.2" height="21.1" fill="#808080"/>
<rect x="562.0" y="250.0" width="16.8" height="21.1" fill="#808080"/>
<circle cx="557.2" cy="284.9" r="7.7" fill="#717171"/><circle cx="557.2" cy="284.9" r="4" fill="#8e8e8e"/>
<rect x="538.4" y="295.4" width="37.4" height="17.2" fill="#808080"/>
<rect x="538.4" y="344.9" width="37.4" height="18.3" fill="#808080"/>
<circle cx="576.9" cy="87.9" r="7.7" fill="#717171"/><circle cx="576.9" cy="87.9" r="4" fill="#8e8e8e"/>
<circle cx="555.2" cy="165.5" r="7.7" fill="#717171"/><circle cx="555.2" cy="165.5" r="4" fill="#8e8e8e"/>
<polyline points="555.2,165.5 575.0,165.5" fill="none" stroke="#717171" stroke-width="7.6" stroke-linejoin="round" stroke-linecap="round"/>
<rect x="568.0" y="156.9" width="21.2" height="17.6" fill="#808080"/>
<polyline points="578.8,170.0 578.8,222.6 570.6,238.9 570.6,261.9" fill="none" stroke="#6b6b6b" stroke-width="7.6" stroke-linejoin="round" stroke-linecap="round"/>
<rect x="600.3" y="158.8" width="39.9" height="28.7" fill="#808080"/>
<polyline points="619.5,173.2 656.9,173.2" fill="none" stroke="#8a8a8a" stroke-width="7.6" stroke-linejoin="round" stroke-linecap="round"/>
<circle cx="656.9" cy="173.2" r="7.7" fill="#8a8a8a"/><circle cx="656.9" cy="173.2" r="4" fill="#9a9a9a"/>
<rect x="601.2" y="266.7" width="33.2" height="40.4" fill="#808080"/>
<polyline points="618.0,283.0 618.3,320.2 607.6,329.4" fill="none" stroke="#8a8a8a" stroke-width="7.6" stroke-linejoin="round" stroke-linecap="round"/>
<circle cx="618.3" cy="320.2" r="7.7" fill="#8a8a8a"/><circle cx="618.3" cy="320.2" r="4" fill="#9a9a9a"/>
<rect x="676.4" y="266.7" width="23.6" height="40.3" fill="#808080"/>
<circle cx="674.1" cy="251.3" r="7.7" fill="#717171"/><circle cx="674.1" cy="251.3" r="4" fill="#8e8e8e"/>
<polyline points="674.1,251.3 682.8,262.8 682.8,276.0 694.0,290.0" fill="none" stroke="#8c8c8c" stroke-width="7.6" stroke-linejoin="round" stroke-linecap="round"/>
<rect x="676.4" y="362.8" width="23.6" height="33.2" fill="#808080"/>
<rect x="695.8" y="194.3" width="4.2" height="32.1" fill="#808080"/></g>
<g><rect x="282.2" y="244.9" width="16.7" height="19.7" fill="#9a4807" stroke="#00ac00" stroke-width="1.8"/>
<rect x="286.1" y="249.1" width="8.8" height="11.4" fill="none" stroke="#c47a52" stroke-width="0.55"/>
<rect x="283.2" y="282.2" width="16.1" height="19.3" fill="#9a4807" stroke="#00ac00" stroke-width="1.8"/>
<rect x="287.0" y="286.3" width="8.6" height="11.2" fill="none" stroke="#c47a52" stroke-width="0.55"/>
<rect x="252.5" y="312.1" width="16.8" height="19.9" fill="#9a4807" stroke="#00ac00" stroke-width="1.8"/>
<rect x="256.4" y="316.3" width="8.9" height="11.5" fill="none" stroke="#c47a52" stroke-width="0.55"/>
<rect x="283.2" y="312.1" width="16.1" height="19.9" fill="#9a4807" stroke="#00ac00" stroke-width="1.8"/>
<rect x="287.0" y="316.3" width="8.6" height="11.5" fill="none" stroke="#c47a52" stroke-width="0.55"/>
<rect x="252.5" y="341.7" width="16.8" height="20.3" fill="#9a4807" stroke="#00ac00" stroke-width="1.8"/>
<rect x="256.4" y="346.0" width="8.9" height="11.7" fill="none" stroke="#c47a52" stroke-width="0.55"/>
<rect x="283.2" y="341.7" width="16.1" height="20.3" fill="#9a4807" stroke="#00ac00" stroke-width="1.8"/>
<rect x="287.0" y="346.0" width="8.6" height="11.7" fill="none" stroke="#c47a52" stroke-width="0.55"/>
<rect x="310.3" y="343.6" width="16.8" height="20.3" fill="#9a4807" stroke="#00ac00" stroke-width="1.8"/>
<rect x="314.3" y="347.9" width="8.9" height="11.7" fill="none" stroke="#c47a52" stroke-width="0.55"/>
<rect x="317.0" y="210.7" width="25.5" height="11.2" fill="#9a4807" stroke="#00ac00" stroke-width="1.8"/>
<rect x="317.0" y="228.9" width="25.5" height="11.6" fill="#9a4807" stroke="#00ac00" stroke-width="1.8"/>
<rect x="317.0" y="247.4" width="25.5" height="11.8" fill="#9a4807" stroke="#00ac00" stroke-width="1.8"/>
<rect x="317.0" y="266.0" width="25.5" height="11.4" fill="#9a4807" stroke="#00ac00" stroke-width="1.8"/>
<rect x="316.5" y="284.5" width="25.8" height="25.7" fill="#9a4807" stroke="#00ac00" stroke-width="1.8"/>
<rect x="322.7" y="290.0" width="13.4" height="14.7" fill="none" stroke="#c47a52" stroke-width="0.55"/>
<rect x="366.9" y="283.7" width="12.4" height="25.8" fill="#9a4807" stroke="#00ac00" stroke-width="1.8"/>
<rect x="385.9" y="283.7" width="12.4" height="25.8" fill="#9a4807" stroke="#00ac00" stroke-width="1.8"/>
<rect x="404.4" y="283.7" width="11.9" height="25.8" fill="#9a4807" stroke="#00ac00" stroke-width="1.8"/>
<rect x="376.6" y="359.8" width="34.4" height="24.9" fill="#9a4807" stroke="#00ac00" stroke-width="1.8"/>
<rect x="385.0" y="365.1" width="17.7" height="14.2" fill="none" stroke="#c47a52" stroke-width="0.55"/>
<rect x="422.8" y="210.1" width="25.5" height="11.4" fill="#9a4807" stroke="#00ac00" stroke-width="1.8"/>
<rect x="422.8" y="228.8" width="25.5" height="11.9" fill="#9a4807" stroke="#00ac00" stroke-width="1.8"/>
<rect x="422.8" y="247.4" width="25.5" height="11.7" fill="#9a4807" stroke="#00ac00" stroke-width="1.8"/>
<rect x="422.8" y="265.8" width="25.5" height="11.9" fill="#9a4807" stroke="#00ac00" stroke-width="1.8"/>
<rect x="422.7" y="284.4" width="25.8" height="25.9" fill="#9a4807" stroke="#00ac00" stroke-width="1.8"/>
<rect x="428.9" y="290.0" width="13.4" height="14.8" fill="none" stroke="#c47a52" stroke-width="0.55"/>
<rect x="472.3" y="221.1" width="16.6" height="20.1" fill="#9a4807" stroke="#00ac00" stroke-width="1.8"/>
<rect x="476.2" y="225.3" width="8.8" height="11.6" fill="none" stroke="#c47a52" stroke-width="0.55"/>
<rect x="472.3" y="250.9" width="16.6" height="20.1" fill="#9a4807" stroke="#00ac00" stroke-width="1.8"/>
<rect x="476.2" y="255.1" width="8.8" height="11.6" fill="none" stroke="#c47a52" stroke-width="0.55"/>
<rect x="531.8" y="250.9" width="16.2" height="20.1" fill="#9a4807" stroke="#00ac00" stroke-width="1.8"/>
<rect x="535.6" y="255.1" width="8.6" height="11.6" fill="none" stroke="#c47a52" stroke-width="0.55"/>
<rect x="466.7" y="296.9" width="36.8" height="17.4" fill="#9a4807" stroke="#00ac00" stroke-width="1.8"/>
<rect x="475.7" y="300.5" width="18.9" height="10.1" fill="none" stroke="#c47a52" stroke-width="0.55"/>
<rect x="538.5" y="320.3" width="36.8" height="18.1" fill="#9a4807" stroke="#00ac00" stroke-width="1.8"/>
<rect x="547.5" y="324.1" width="18.9" height="10.5" fill="none" stroke="#c47a52" stroke-width="0.55"/>
<rect x="466.7" y="344.6" width="36.8" height="18.3" fill="#9a4807" stroke="#00ac00" stroke-width="1.8"/>
<rect x="475.7" y="348.4" width="18.9" height="10.6" fill="none" stroke="#c47a52" stroke-width="0.55"/>
<rect x="437.7" y="384.5" width="34.4" height="11.0" fill="#9a4807" stroke="#00ac00" stroke-width="1.8"/>
<rect x="488.9" y="385.5" width="20.3" height="10.0" fill="#9a4807" stroke="#00ac00" stroke-width="1.8"/>
<rect x="427.2" y="63.8" width="34.1" height="24.9" fill="#9a4807" stroke="#00ac00" stroke-width="1.8"/>
<rect x="435.5" y="69.1" width="17.6" height="14.2" fill="none" stroke="#c47a52" stroke-width="0.55"/>
<rect x="427.2" y="112.8" width="34.1" height="23.9" fill="#9a4807" stroke="#00ac00" stroke-width="1.8"/>
<rect x="435.5" y="117.9" width="17.6" height="13.7" fill="none" stroke="#c47a52" stroke-width="0.55"/>
<rect x="488.0" y="88.4" width="34.7" height="24.7" fill="#9a4807" stroke="#00ac00" stroke-width="1.8"/>
<rect x="496.4" y="93.7" width="17.9" height="14.1" fill="none" stroke="#c47a52" stroke-width="0.55"/>
<rect x="472.7" y="160.8" width="16.2" height="20.5" fill="#9a4807" stroke="#00ac00" stroke-width="1.8"/>
<rect x="476.5" y="165.1" width="8.6" height="11.8" fill="none" stroke="#c47a52" stroke-width="0.55"/>
<rect x="502.0" y="160.8" width="17.2" height="20.5" fill="#9a4807" stroke="#00ac00" stroke-width="1.8"/>
<rect x="506.1" y="165.1" width="9.1" height="11.8" fill="none" stroke="#c47a52" stroke-width="0.55"/>
<rect x="472.7" y="190.9" width="16.2" height="20.1" fill="#9a4807" stroke="#00ac00" stroke-width="1.8"/>
<rect x="476.5" y="195.1" width="8.6" height="11.6" fill="none" stroke="#c47a52" stroke-width="0.55"/>
<rect x="502.0" y="190.9" width="17.2" height="20.1" fill="#9a4807" stroke="#00ac00" stroke-width="1.8"/>
<rect x="506.1" y="195.1" width="9.1" height="11.6" fill="none" stroke="#c47a52" stroke-width="0.55"/>
<rect x="420.5" y="178.1" width="27.8" height="25.3" fill="#9a4807" stroke="#00ac00" stroke-width="1.8"/>
<rect x="427.2" y="183.5" width="14.4" height="14.5" fill="none" stroke="#c47a52" stroke-width="0.55"/>
<rect x="568.5" y="128.0" width="20.2" height="15.9" fill="#9a4807" stroke="#00ac00" stroke-width="1.8"/>
<rect x="573.3" y="131.3" width="10.6" height="9.3" fill="none" stroke="#c47a52" stroke-width="0.55"/>
<rect x="600.4" y="120.4" width="39.3" height="30.6" fill="#9a4807" stroke="#00ac00" stroke-width="1.8"/>
<rect x="610.0" y="127.0" width="20.2" height="17.4" fill="none" stroke="#c47a52" stroke-width="0.55"/>
<rect x="600.4" y="194.8" width="39.3" height="31.1" fill="#9a4807" stroke="#00ac00" stroke-width="1.8"/>
<rect x="610.0" y="201.5" width="20.2" height="17.7" fill="none" stroke="#c47a52" stroke-width="0.55"/>
<rect x="602.0" y="363.3" width="31.4" height="32.2" fill="#9a4807" stroke="#00ac00" stroke-width="1.8"/>
<rect x="609.6" y="370.3" width="16.2" height="18.3" fill="none" stroke="#c47a52" stroke-width="0.55"/>
<rect x="641.5" y="363.3" width="27.9" height="32.2" fill="#9a4807" stroke="#00ac00" stroke-width="1.8"/>
<rect x="648.2" y="370.3" width="14.4" height="18.3" fill="none" stroke="#c47a52" stroke-width="0.55"/>
<rect x="696.3" y="120.5" width="9.2" height="24.0" fill="#9a4807" stroke="#00ac00" stroke-width="1.8"/>
<rect x="120" y="336.4" width="17.2" height="19.3" fill="#b25208" stroke="#8a2a00" stroke-width="0.8"/>
<rect x="120" y="372.8" width="17.2" height="25" fill="#b25208" stroke="#8a2a00" stroke-width="0.8"/></g>
<g fill="none" stroke="#2389a6" stroke-width="0.75"><polyline points="449.7,142.0 449.7,59.9 500.2,59.9 500.2,143.0"/>
<polyline points="471.8,59.9 449.7,83.5"/>
<polyline points="449.7,141.9 490.0,141.9"/>
<polyline points="702.0,53.4 535.7,53.4 535.7,395.0"/>
<polyline points="702.0,116.7 632.5,116.7 632.5,229.6 702.0,229.6"/>
<polyline points="654.0,116.7 632.5,138.0"/>
<polyline points="569.2,127.0 569.2,175.0 589.0,175.0"/>
<polyline points="440.1,205.0 440.1,311.0"/>
<polyline points="495.3,289.7 547.5,289.7 547.5,369.8 495.3,369.8 495.3,289.7"/>
<polyline points="525.3,369.8 547.5,348.6"/>
<polyline points="418.0,355.7 450.0,355.7 450.0,395.0"/>
<polyline points="702.0,299.9 598.5,299.9 598.5,370.9 702.0,370.9"/>
<polyline points="598.5,348.6 614.7,364.8"/>
<polyline points="325.0,205.0 325.0,290.0"/>
<polyline points="489.4,162.6 501.5,162.6"/>
<polyline points="489.4,180.8 501.5,180.8"/>
<polyline points="489.4,192.6 501.5,192.6"/>
<polyline points="489.4,210.0 501.5,210.0"/>
<polyline points="489.4,222.6 501.5,222.6"/>
<polyline points="489.4,240.5 501.5,240.5"/>
<polyline points="489.4,252.5 501.5,252.5"/>
<polyline points="489.4,270.5 501.5,270.5"/>
<polyline points="262.0,246.0 285.0,246.0"/>
<polyline points="262.0,263.6 285.0,263.6"/>
<polyline points="262.0,283.5 285.0,283.5"/>
<polyline points="262.0,300.5 285.0,300.5"/>
<polyline points="262.0,313.5 285.0,313.5"/>
<polyline points="262.0,331.0 285.0,331.0"/>
<polyline points="262.0,343.0 285.0,343.0"/>
<polyline points="262.0,361.0 285.0,361.0"/>
<polyline points="327.6,345.0 357.0,345.0 357.0,362.5 327.6,362.5"/>
<polyline points="358.3,362.0 368.3,372.0 358.3,382.4 358.3,362.0"/>
<polyline points="400.0,395.0 400.0,355.6 430.0,355.6"/>
<polyline points="548.5,252.5 562.0,252.5"/>
<polyline points="548.5,270.0 562.0,270.0"/>
<polyline points="126.0,336.0 141.0,336.0 141.0,356.0"/>
<polyline points="126.0,370.0 136.0,370.0 141.0,376.0 141.0,395.0"/></g>
<clipPath id="pc"><rect x="281.7" y="244.4" width="17.7" height="20.7"/><rect x="282.7" y="281.7" width="17.1" height="20.3"/><rect x="252.0" y="311.6" width="17.8" height="20.9"/><rect x="282.7" y="311.6" width="17.1" height="20.9"/><rect x="252.0" y="341.2" width="17.8" height="21.3"/><rect x="282.7" y="341.2" width="17.1" height="21.3"/><rect x="309.8" y="343.1" width="17.8" height="21.3"/><rect x="316.5" y="210.2" width="26.5" height="12.2"/><rect x="316.5" y="228.4" width="26.5" height="12.6"/><rect x="316.5" y="246.9" width="26.5" height="12.8"/><rect x="316.5" y="265.5" width="26.5" height="12.4"/><rect x="316.0" y="284.0" width="26.8" height="26.7"/><rect x="366.4" y="283.2" width="13.4" height="26.8"/><rect x="385.4" y="283.2" width="13.4" height="26.8"/><rect x="403.9" y="283.2" width="12.9" height="26.8"/><rect x="376.1" y="359.3" width="35.4" height="25.9"/><rect x="422.3" y="209.6" width="26.5" height="12.4"/><rect x="422.3" y="228.3" width="26.5" height="12.9"/><rect x="422.3" y="246.9" width="26.5" height="12.7"/><rect x="422.3" y="265.3" width="26.5" height="12.9"/><rect x="422.2" y="283.9" width="26.8" height="26.9"/><rect x="471.8" y="220.6" width="17.6" height="21.1"/><rect x="471.8" y="250.4" width="17.6" height="21.1"/><rect x="531.3" y="250.4" width="17.2" height="21.1"/><rect x="466.2" y="296.4" width="37.8" height="18.4"/><rect x="538.0" y="319.8" width="37.8" height="19.1"/><rect x="466.2" y="344.1" width="37.8" height="19.3"/><rect x="437.2" y="384.0" width="35.4" height="12.0"/><rect x="488.4" y="385.0" width="21.3" height="11.0"/><rect x="426.7" y="63.3" width="35.1" height="25.9"/><rect x="426.7" y="112.3" width="35.1" height="24.9"/><rect x="487.5" y="87.9" width="35.7" height="25.7"/><rect x="472.2" y="160.3" width="17.2" height="21.5"/><rect x="501.5" y="160.3" width="18.2" height="21.5"/><rect x="472.2" y="190.4" width="17.2" height="21.1"/><rect x="501.5" y="190.4" width="18.2" height="21.1"/><rect x="420.0" y="177.6" width="28.8" height="26.3"/><rect x="568.0" y="127.5" width="21.2" height="16.9"/><rect x="599.9" y="119.9" width="40.3" height="31.6"/><rect x="599.9" y="194.3" width="40.3" height="32.1"/><rect x="601.5" y="362.8" width="32.4" height="33.2"/><rect x="641.0" y="362.8" width="28.9" height="33.2"/><rect x="695.8" y="120.0" width="10.2" height="25.0"/></clipPath>
<g><polyline points="261.2,312.2 261.2,358.0 248.0,379.4" fill="none" stroke="#b80c04" stroke-width="13.5" stroke-linejoin="round" stroke-linecap="butt"/>
<polyline points="290.7,197.3 302.0,210.7 302.0,245.9 291.3,255.0 326.5,255.0" fill="none" stroke="#b80c04" stroke-width="2.8" stroke-linejoin="round" stroke-linecap="round"/>
<polyline points="291.3,292.8 320.1,292.8 329.0,301.0" fill="none" stroke="#b80c04" stroke-width="3" stroke-linejoin="round" stroke-linecap="round"/>
<polyline points="291.3,297.0 291.3,322.7" fill="none" stroke="#b80c04" stroke-width="3" stroke-linejoin="round" stroke-linecap="round"/>
<polyline points="291.3,351.6 319.0,351.6 319.0,382.0 324.5,387.5 374.5,387.5 391.8,372.5" fill="none" stroke="#b80c04" stroke-width="3" stroke-linejoin="round" stroke-linecap="round"/>
<polyline points="291.3,351.6 291.8,395.0" fill="none" stroke="#b80c04" stroke-width="3" stroke-linejoin="round" stroke-linecap="round"/>
<polyline points="370.8,298.0 370.8,327.4" fill="none" stroke="#b80c04" stroke-width="2.8" stroke-linejoin="round" stroke-linecap="round"/>
<polyline points="408.0,298.0 408.0,327.4" fill="none" stroke="#b80c04" stroke-width="2.8" stroke-linejoin="round" stroke-linecap="round"/>
<polyline points="389.5,298.0 389.5,332.3 397.2,341.3 397.2,395.0" fill="none" stroke="#b80c04" stroke-width="2.8" stroke-linejoin="round" stroke-linecap="round"/>
<polyline points="432.5,298.0 438.8,303.5 438.8,327.3" fill="none" stroke="#b80c04" stroke-width="2.8" stroke-linejoin="round" stroke-linecap="round"/>
<polyline points="432.0,217.5 465.1,217.5 481.4,201.9" fill="none" stroke="#b80c04" stroke-width="3.5" stroke-linejoin="round" stroke-linecap="round"/>
<polyline points="432.0,236.0 472.7,236.0 481.4,230.8" fill="none" stroke="#b80c04" stroke-width="3.5" stroke-linejoin="round" stroke-linecap="round"/>
<polyline points="432.0,254.6 460.3,254.6" fill="none" stroke="#b80c04" stroke-width="3.5" stroke-linejoin="round" stroke-linecap="round"/>
<polyline points="432.0,273.0 468.0,273.0 481.4,260.9" fill="none" stroke="#b80c04" stroke-width="3.5" stroke-linejoin="round" stroke-linecap="round"/>
<polyline points="540.5,260.9 526.5,273.4 526.5,296.0" fill="none" stroke="#b80c04" stroke-width="3.5" stroke-linejoin="round" stroke-linecap="round"/>
<polyline points="484.8,305.5 515.0,305.5 526.5,296.0" fill="none" stroke="#b80c04" stroke-width="4.5" stroke-linejoin="round" stroke-linecap="round"/>
<polyline points="526.9,329.8 558.7,329.8" fill="none" stroke="#b80c04" stroke-width="3.5" stroke-linejoin="round" stroke-linecap="round"/>
<polyline points="482.8,353.6 515.5,353.6" fill="none" stroke="#b80c04" stroke-width="13" stroke-linejoin="round" stroke-linecap="round"/>
<polyline points="420.0,72.9 441.1,72.9 444.6,76.8 444.6,123.8 431.5,137.2 420.0,147.0" fill="none" stroke="#b80c04" stroke-width="3.5" stroke-linejoin="round" stroke-linecap="round"/>
<polyline points="505.4,74.9 505.4,100.8" fill="none" stroke="#b80c04" stroke-width="3.5" stroke-linejoin="round" stroke-linecap="round"/>
<polyline points="505.4,97.0 518.8,93.0 539.9,71.6 702.0,71.4" fill="none" stroke="#b80c04" stroke-width="3.5" stroke-linejoin="round" stroke-linecap="round"/>
<polyline points="497.7,143.4 511.1,156.9 511.1,210.9" fill="none" stroke="#b80c04" stroke-width="14" stroke-linejoin="round" stroke-linecap="butt"/>
<polyline points="481.4,171.2 459.3,192.3 433.4,192.3" fill="none" stroke="#b80c04" stroke-width="3.5" stroke-linejoin="round" stroke-linecap="round"/>
<polyline points="554.9,105.5 554.9,136.1" fill="none" stroke="#e00000" stroke-width="7" stroke-linejoin="round" stroke-linecap="round"/>
<polyline points="554.9,136.1 626.0,136.1" fill="none" stroke="#e00000" stroke-width="7" stroke-linejoin="round" stroke-linecap="round"/>
<polyline points="621.4,210.2 632.9,210.2 651.7,229.3" fill="none" stroke="#b80c04" stroke-width="3.5" stroke-linejoin="round" stroke-linecap="round"/>
<polyline points="618.3,350.2 618.3,380.0 606.0,395.0" fill="none" stroke="#b80c04" stroke-width="3.5" stroke-linejoin="round" stroke-linecap="round"/>
<polyline points="655.1,383.0 647.0,395.0" fill="none" stroke="#b80c04" stroke-width="3.5" stroke-linejoin="round" stroke-linecap="round"/></g>
<g clip-path="url(#pc)"><polyline points="261.2,312.2 261.2,358.0 248.0,379.4" fill="none" stroke="#ff2200" stroke-width="13.5" stroke-linejoin="round" stroke-linecap="butt"/>
<polyline points="290.7,197.3 302.0,210.7 302.0,245.9 291.3,255.0 326.5,255.0" fill="none" stroke="#ff2200" stroke-width="2.8" stroke-linejoin="round" stroke-linecap="round"/>
<polyline points="291.3,292.8 320.1,292.8 329.0,301.0" fill="none" stroke="#ff2200" stroke-width="3" stroke-linejoin="round" stroke-linecap="round"/>
<polyline points="291.3,297.0 291.3,322.7" fill="none" stroke="#ff2200" stroke-width="3" stroke-linejoin="round" stroke-linecap="round"/>
<polyline points="291.3,351.6 319.0,351.6 319.0,382.0 324.5,387.5 374.5,387.5 391.8,372.5" fill="none" stroke="#ff2200" stroke-width="3" stroke-linejoin="round" stroke-linecap="round"/>
<polyline points="291.3,351.6 291.8,395.0" fill="none" stroke="#ff2200" stroke-width="3" stroke-linejoin="round" stroke-linecap="round"/>
<polyline points="370.8,298.0 370.8,327.4" fill="none" stroke="#ff2200" stroke-width="2.8" stroke-linejoin="round" stroke-linecap="round"/>
<polyline points="408.0,298.0 408.0,327.4" fill="none" stroke="#ff2200" stroke-width="2.8" stroke-linejoin="round" stroke-linecap="round"/>
<polyline points="389.5,298.0 389.5,332.3 397.2,341.3 397.2,395.0" fill="none" stroke="#ff2200" stroke-width="2.8" stroke-linejoin="round" stroke-linecap="round"/>
<polyline points="432.5,298.0 438.8,303.5 438.8,327.3" fill="none" stroke="#ff2200" stroke-width="2.8" stroke-linejoin="round" stroke-linecap="round"/>
<polyline points="432.0,217.5 465.1,217.5 481.4,201.9" fill="none" stroke="#ff2200" stroke-width="3.5" stroke-linejoin="round" stroke-linecap="round"/>
<polyline points="432.0,236.0 472.7,236.0 481.4,230.8" fill="none" stroke="#ff2200" stroke-width="3.5" stroke-linejoin="round" stroke-linecap="round"/>
<polyline points="432.0,254.6 460.3,254.6" fill="none" stroke="#ff2200" stroke-width="3.5" stroke-linejoin="round" stroke-linecap="round"/>
<polyline points="432.0,273.0 468.0,273.0 481.4,260.9" fill="none" stroke="#ff2200" stroke-width="3.5" stroke-linejoin="round" stroke-linecap="round"/>
<polyline points="540.5,260.9 526.5,273.4 526.5,296.0" fill="none" stroke="#ff2200" stroke-width="3.5" stroke-linejoin="round" stroke-linecap="round"/>
<polyline points="484.8,305.5 515.0,305.5 526.5,296.0" fill="none" stroke="#ff2200" stroke-width="4.5" stroke-linejoin="round" stroke-linecap="round"/>
<polyline points="526.9,329.8 558.7,329.8" fill="none" stroke="#ff2200" stroke-width="3.5" stroke-linejoin="round" stroke-linecap="round"/>
<polyline points="482.8,353.6 515.5,353.6" fill="none" stroke="#ff2200" stroke-width="13" stroke-linejoin="round" stroke-linecap="round"/>
<polyline points="420.0,72.9 441.1,72.9 444.6,76.8 444.6,123.8 431.5,137.2 420.0,147.0" fill="none" stroke="#ff2200" stroke-width="3.5" stroke-linejoin="round" stroke-linecap="round"/>
<polyline points="505.4,74.9 505.4,100.8" fill="none" stroke="#ff2200" stroke-width="3.5" stroke-linejoin="round" stroke-linecap="round"/>
<polyline points="505.4,97.0 518.8,93.0 539.9,71.6 702.0,71.4" fill="none" stroke="#ff2200" stroke-width="3.5" stroke-linejoin="round" stroke-linecap="round"/>
<polyline points="497.7,143.4 511.1,156.9 511.1,210.9" fill="none" stroke="#ff2200" stroke-width="14" stroke-linejoin="round" stroke-linecap="butt"/>
<polyline points="481.4,171.2 459.3,192.3 433.4,192.3" fill="none" stroke="#ff2200" stroke-width="3.5" stroke-linejoin="round" stroke-linecap="round"/>
<polyline points="554.9,105.5 554.9,136.1" fill="none" stroke="#ff2200" stroke-width="7" stroke-linejoin="round" stroke-linecap="round"/>
<polyline points="554.9,136.1 626.0,136.1" fill="none" stroke="#ff2200" stroke-width="7" stroke-linejoin="round" stroke-linecap="round"/>
<polyline points="621.4,210.2 632.9,210.2 651.7,229.3" fill="none" stroke="#ff2200" stroke-width="3.5" stroke-linejoin="round" stroke-linecap="round"/>
<polyline points="618.3,350.2 618.3,380.0 606.0,395.0" fill="none" stroke="#ff2200" stroke-width="3.5" stroke-linejoin="round" stroke-linecap="round"/>
<polyline points="655.1,383.0 647.0,395.0" fill="none" stroke="#ff2200" stroke-width="3.5" stroke-linejoin="round" stroke-linecap="round"/></g>
<g><polygon points="372.3,313.9 378.0,324.7 363.6,324.7 369.3,313.9" fill="#a80800" stroke="#e01808" stroke-width="0.5"/>
<polygon points="409.5,313.9 415.2,324.7 400.8,324.7 406.5,313.9" fill="#a80800" stroke="#e01808" stroke-width="0.5"/>
<polygon points="440.3,313.8 446.0,324.6 431.6,324.6 437.3,313.8" fill="#a80800" stroke="#e01808" stroke-width="0.5"/>
<polygon points="446.8,253.1 457.6,247.4 457.6,261.8 446.8,256.1" fill="#a80800" stroke="#e01808" stroke-width="0.5"/>
<polygon points="528.0,282.5 533.7,293.3 519.3,293.3 525.0,282.5" fill="#a80800" stroke="#e01808" stroke-width="0.5"/>
<polygon points="516.3,302.5 519.9,292.2 529.0,303.2 518.2,304.8" fill="#a80800" stroke="#e01808" stroke-width="0.5"/>
<polygon points="540.4,331.3 529.6,337.0 529.6,322.6 540.4,328.3" fill="#a80800" stroke="#e01808" stroke-width="0.5"/>
<polygon points="503.9,88.4 498.2,77.6 512.6,77.6 506.9,88.4" fill="#a80800" stroke="#e01808" stroke-width="0.5"/>
<polygon points="644.4,219.7 654.9,222.4 644.7,232.4 642.2,221.8" fill="#a80800" stroke="#e01808" stroke-width="0.5"/>
<polygon points="616.8,363.7 611.1,352.9 625.5,352.9 619.8,363.7" fill="#a80800" stroke="#e01808" stroke-width="0.5"/></g>
<g><circle cx="266.6" cy="54.4" r="7.7" fill="#d40000"/><circle cx="266.6" cy="54.4" r="2.7" fill="#ba7c7c"/>
<circle cx="306.0" cy="111.0" r="7.7" fill="#d40000"/><circle cx="306.0" cy="111.0" r="2.7" fill="#ba7c7c"/>
<circle cx="290.7" cy="197.3" r="7.7" fill="#d40000"/><circle cx="290.7" cy="197.3" r="2.7" fill="#ba7c7c"/>
<circle cx="248.0" cy="379.4" r="8" fill="#d40000"/><circle cx="248.0" cy="379.4" r="2.7" fill="#ba7c7c"/>
<circle cx="277.9" cy="379.4" r="8" fill="#d40000"/><circle cx="277.9" cy="379.4" r="2.7" fill="#ba7c7c"/>
<circle cx="286.6" cy="233.1" r="7.7" fill="#d40000"/><circle cx="286.6" cy="233.1" r="2.7" fill="#ba7c7c"/>
<circle cx="314.9" cy="327.8" r="8" fill="#d40000"/><circle cx="314.9" cy="327.8" r="2.7" fill="#ba7c7c"/>
<circle cx="370.8" cy="327.4" r="8" fill="#d40000"/><circle cx="370.8" cy="327.4" r="2.7" fill="#ba7c7c"/>
<circle cx="408.0" cy="327.4" r="8" fill="#d40000"/><circle cx="408.0" cy="327.4" r="2.7" fill="#ba7c7c"/>
<circle cx="438.8" cy="327.3" r="8" fill="#d40000"/><circle cx="438.8" cy="327.3" r="2.7" fill="#ba7c7c"/>
<circle cx="460.3" cy="254.6" r="7.7" fill="#d40000"/><circle cx="460.3" cy="254.6" r="2.7" fill="#ba7c7c"/>
<circle cx="526.5" cy="296.0" r="7.7" fill="#d40000"/><circle cx="526.5" cy="296.0" r="2.7" fill="#ba7c7c"/>
<circle cx="526.9" cy="329.8" r="7.7" fill="#d40000"/><circle cx="526.9" cy="329.8" r="2.7" fill="#ba7c7c"/>
<circle cx="515.5" cy="353.6" r="8" fill="#d40000"/><circle cx="515.5" cy="353.6" r="2.7" fill="#ba7c7c"/>
<circle cx="505.4" cy="74.9" r="7.7" fill="#d40000"/><circle cx="505.4" cy="74.9" r="2.7" fill="#ba7c7c"/>
<circle cx="497.7" cy="143.4" r="7.7" fill="#d40000"/><circle cx="497.7" cy="143.4" r="2.7" fill="#ba7c7c"/>
<circle cx="554.9" cy="105.5" r="7.7" fill="#d40000"/><circle cx="554.9" cy="105.5" r="2.7" fill="#ba7c7c"/>
<circle cx="554.9" cy="136.1" r="7.7" fill="#d40000"/><circle cx="554.9" cy="136.1" r="2.7" fill="#ba7c7c"/>
<circle cx="651.7" cy="229.3" r="7.7" fill="#d40000"/><circle cx="651.7" cy="229.3" r="2.7" fill="#ba7c7c"/>
<circle cx="618.3" cy="350.2" r="7.7" fill="#d40000"/><circle cx="618.3" cy="350.2" r="2.7" fill="#ba7c7c"/></g>
<line x1="497.7" y1="143.4" x2="420" y2="171.5" stroke="#c9a7a7" stroke-width="0.5"/>
<g font-family="Liberation Sans, sans-serif" fill="#a2a2a2"><text x="382.6" y="247.5" font-size="9.5" text-anchor="middle">GND</text><text x="374" y="279" font-size="11.5" text-anchor="middle" fill="#9a9a9a">GND</text>
<text transform="translate(580.5,210) rotate(-90)" font-size="5" fill="#8c8c8c">GND</text><text transform="translate(264,279) rotate(-90)" font-size="4" fill="#8c8c8c">GND</text>
<text x="557" y="355.5" font-size="4.5" text-anchor="middle" fill="#8f8f8f">GND</text></g>
<g font-family="Liberation Sans, sans-serif" fill="#f0c8a0" font-size="3">
<text transform="translate(512.5,164) rotate(90)" fill="#ffb0a0" font-size="4">3V3_AO</text><text transform="translate(512.5,193) rotate(90)" fill="#ffb0a0" font-size="4">3V3_AO</text>
<text transform="translate(258,329) rotate(-90)" fill="#ffb0a0" font-size="4">3V3_AO</text><text transform="translate(258,359) rotate(-90)" fill="#ffb0a0" font-size="4">3V3_AO</text>
<text x="427" y="217">RMII_TXD1</text><text x="427" y="236">RMII_TXD0</text><text x="427" y="273">RMII_TXEN</text>
<text x="475" y="306.5" font-size="3.5">CLKIN EX</text><text x="478" y="354.5">RMII_CLK</text>
<text x="498" y="102">3V3_SYS</text><text x="612" y="137.5">RMII_RXD_ER</text><text x="612" y="211">RMII_RXD0</text>
</g>
</svg><div class="a" style="left:2424.8px;top:164.8px;width:972.8px;height:1459.2px;background:#f2f2f2;box-shadow:9.6px 9.6px 12.8px rgba(0,0,0,0.45);border:4px solid #c4c4c4;box-sizing:border-box">
<div class="mi" style="top:15.2px">Create <u>M</u>odule...</div>
<div class="mi" style="top:95.2px"><u>P</u>adstack</div>
<div class="arr" style="top:114.4px"></div>
<div class="mi" style="top:173.6px">P<u>a</u>d</div>
<div class="arr" style="top:192.8px"></div>
<div class="a" style="left:8px;top:245.6px;width:956px;height:74.4px;background:#91c9f7"></div>
<div class="mi" style="top:252px"><u>D</u>erive Connectivity...</div>
<div class="msep" style="top:360.8px"></div>
<div class="mi" style="top:371.2px"><u>R</u>eports...</div>
<div class="mi" style="top:448px">Quick Reports</div>
<div class="arr" style="top:467.2px"></div>
<div class="msep" style="top:536px"></div>
<div class="mi" style="top:562.4px">Topology E<u>x</u>tract</div>
<div class="mi" style="top:640.8px"><u>T</u>echnology File Compare...</div>
<div class="msep" style="top:724px"></div>
<div class="mi" style="top:750.4px">Database <u>C</u>heck...</div>
<div class="a" style="left:894.4px;top:750.4px;font-size:46px">f</div>
<div class="mi" style="top:836px"><u>U</u>pdate DRC</div>
<div class="mi" style="top:919.2px"><u>W</u>indow DRC</div>
<div class="msep" style="top:1007.2px"></div>
<div class="mi" style="top:1030.4px">Design C<u>o</u>mpare...</div>
<div class="mi" style="top:1112px">Data<u>b</u>ase Diary...</div>
<div class="msep" style="top:1196px"></div>
<div class="mi" style="top:1219.2px">Uti<u>l</u>ities</div>
<div class="arr" style="top:1238.4px"></div>
<div class="mi" style="top:1299.2px">New BluePrint Documentation...</div>
<div class="mi" style="top:1377.6px">Update BluePrint Documentation...</div>
<svg class="a" style="left:28px;top:372px" width="64" height="64" viewBox="0 0 8 8"><rect x="2.4" y="0.8" width="4.6" height="4.6" fill="#dfe8fb" stroke="#4868b0" stroke-width="0.5"/><rect x="0.8" y="2.4" width="4.6" height="4.6" fill="#f3f6ff" stroke="#4868b0" stroke-width="0.5"/></svg>
<svg class="a" style="left:28px;top:836px" width="64" height="64" viewBox="0 0 8 8"><path d="M1 6.6v-5M1 6.6h6" stroke="#3c5a9a" stroke-width="0.6"/><rect x="2" y="3" width="1.4" height="3" fill="#3aa84a"/><rect x="4" y="1.8" width="1.4" height="4.2" fill="#5b86d4"/><rect x="5.8" y="3.6" width="1.2" height="2.4" fill="#3aa84a"/></svg>
<svg class="a" style="left:28px;top:920px" width="64" height="64" viewBox="0 0 8 8"><rect x="1" y="1.4" width="6" height="5.4" fill="#e6ebf6" stroke="#586a94" stroke-width="0.6"/><path d="M1 3h6M2 4.6h4" stroke="#586a94" stroke-width="0.6"/></svg>
</div>
<div class="a" style="left:2428.8px;top:401.6px;width:1022.4px;height:102.4px;box-sizing:border-box;border:14.4px solid #fbbd10;border-radius:19.2px"></div>
<div class="a" style="left:1158.4px;top:852px;width:960.8px;height:804.8px;background:#f0f0f0;box-shadow:0 0 16px rgba(0,0,0,0.4)">
<div class="a" style="left:0;top:0;width:960.8px;height:102.4px;background:#fff"></div>
<svg class="a" style="left:25.6px;top:20.8px" width="64" height="64" viewBox="0 0 8 8"><path d="M0.6 0.8h3l1 3l-1 3.4h-3l1.2-3.2z" fill="#2a3f9a"/><path d="M3.6 0.8h3.6l-1.6 3l1.8 3.4h-3.2l-1.2-3.4z" fill="#d8231f"/></svg>
<div class="a ui" style="left:102.4px;top:28.8px;color:#c2c2c2;font-size:46.4px">Derive Connecti...</div>
<svg class="a" style="left:848px;top:30.4px" width="48" height="48" viewBox="0 0 6 6"><path d="M0.8 0.8l4.2 4.2M5 0.8l-4.2 4.2" stroke="#bdbdbd" stroke-width="0.6"/></svg>
<div class="cb" style="left:28.8px;top:162.4px"></div><div class="a ui" style="left:86.4px;top:165.6px;font-size:38.8px">Convert lines to connect lines</div>
<div class="cb" style="left:78.4px;top:252px"></div><div class="a ui" style="left:136px;top:255.2px;font-size:38.8px">Keep connect lines if no connection</div>
<div class="cb" style="left:28.8px;top:336px"></div><div class="a ui" style="left:86.4px;top:339.2px;font-size:38.8px">Convert figure stackups to vias</div>
<div class="cb" style="left:28.8px;top:424px"></div><div class="a ui" style="left:86.4px;top:427.2px;font-size:38.8px">Convert pins</div>
<div class="btn ui" style="left:31.2px;top:631.2px;width:243.2px;height:77.6px;line-height:67.2px;border:7.2px solid #0078d7;font-size:38.8px">OK</div>
<div class="btn ui" style="left:307.2px;top:631.2px;width:246.4px;height:77.6px;line-height:69.6px;font-size:38.8px">Cancel</div>
<div class="btn ui" style="left:660px;top:631.2px;width:245.6px;height:77.6px;line-height:69.6px;font-size:38.8px">Help</div>
<div class="a" style="left:0;top:728px;width:960.8px;height:4px;background:#dcdcdc"></div><div class="a" style="left:96.8px;top:736px;width:4px;height:64px;background:#d0d0d0"></div>
</div>
<div class="a" style="left:1101.6px;top:899.2px;width:1033.6px;height:753.6px;box-sizing:border-box;border:15.2px solid #fbc313;border-radius:24px"></div>
<svg class="a" style="left:2080px;top:464px" width="360" height="384" viewBox="260 58 45 48"><polygon points="296.9,62.4 299.6,65 283.2,90 285,93.9 265.4,101.9 269.2,81 275.6,84.2" fill="#fbc210"/></svg>
<div class="a" style="left:6344px;top:2763.2px;width:584px;height:92px;background:#fff;border:4px solid #cddcf2;box-sizing:border-box;border-radius:16px 0 0 16px"></div>
<svg class="a" style="left:6264px;top:2736px" width="656" height="136" viewBox="783 341 82 17"><rect x="785.2" y="343.2" width="13.2" height="13" rx="2.6" fill="#f2541b" transform="rotate(-10 791.8 349.7)"/><text x="791.9" y="354.4" font-family="Liberation Sans,sans-serif" font-weight="bold" font-style="italic" font-size="12" fill="#fff" text-anchor="middle">S</text><text x="801.6" y="353.2" font-family="Liberation Sans,Noto Sans CJK SC,sans-serif" font-size="7.2" font-weight="bold" fill="#1d6fe0">中</text><circle cx="814.6" cy="349" r="0.9" fill="#1d6fe0"/><path d="M817.4 351.8c0.9-0.5 1-1.3 0.4-2.2" stroke="#1d6fe0" stroke-width="1" fill="none"/><rect x="825.3" y="346.2" width="2.8" height="4.8" rx="1.4" fill="#1d6fe0"/><path d="M824 349.8c0 3.4 5.4 3.4 5.4 0M826.7 352.4v1.8" fill="none" stroke="#1d6fe0" stroke-width="0.8"/><rect x="834" y="347.2" width="7" height="5.6" rx="0.8" fill="none" stroke="#1d6fe0" stroke-width="1"/><path d="M835.4 349h4.2M835.4 350.9h4.2" stroke="#1d6fe0" stroke-width="0.7"/><path d="M846 346.8l1.8-0.9c0.8 0.9 2.2 0.9 3 0l1.8 0.9l1.3 2.1l-1.5 0.9l-0.5-0.7v4.6h-5.2v-4.6l-0.5 0.7l-1.5-0.9z" fill="#1d6fe0"/><g fill="#1d6fe0"><rect x="856" y="346.4" width="2.8" height="2.8" rx="0.8"/><rect x="859.8" y="346.4" width="2.8" height="2.8" rx="0.8"/><rect x="856" y="350.2" width="2.8" height="2.8" rx="0.8"/><rect x="859.8" y="350.2" width="2.8" height="2.8" rx="0.8"/></g></svg>
<div class="a" style="left:5696px;top:3532px;font-family:'Liberation Sans','Noto Sans CJK SC',sans-serif;font-size:135.2px;color:#8f8f8f;text-shadow:5.6px 5.6px 4px rgba(255,255,255,0.95),-4px -4px 4px rgba(255,255,255,0.8);letter-spacing:-1.6px">CSDN @刘小同学</div></div></div></body></html>
